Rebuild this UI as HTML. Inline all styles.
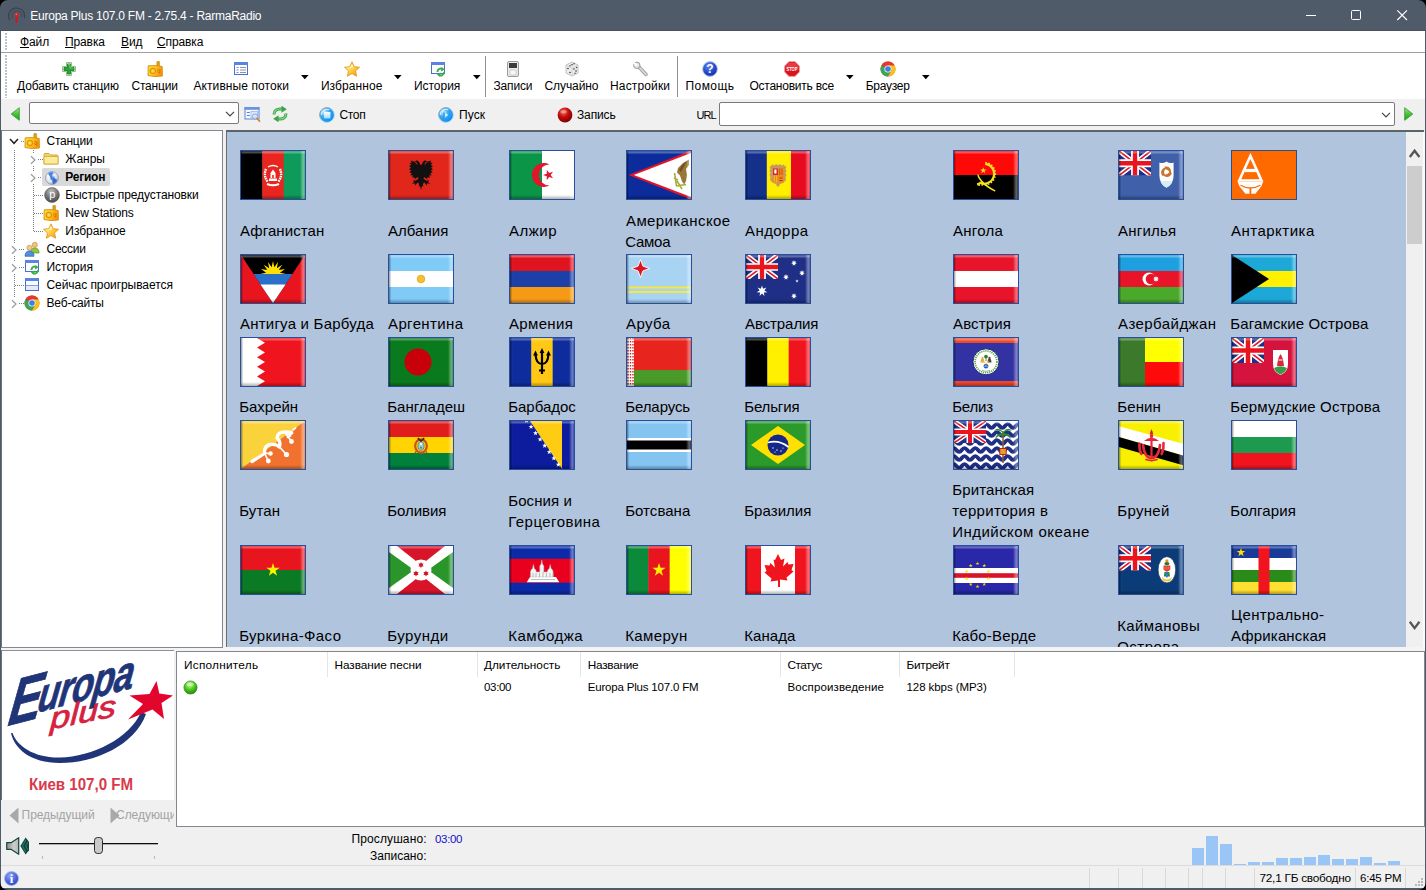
<!DOCTYPE html>
<html lang="ru"><head><meta charset="utf-8"><title>Europa Plus 107.0 FM - 2.75.4 - RarmaRadio</title>
<style>
html,body{margin:0;padding:0;}
body{width:1426px;height:890px;overflow:hidden;position:relative;background:#f0f0f0;font-family:"Liberation Sans",sans-serif;font-size:12px;color:#000;}
.a{position:absolute;}
.t{position:absolute;white-space:nowrap;line-height:16px;height:16px;}
.c{text-align:center;}
#title{left:0;top:0;width:1426px;height:31px;background:#4f5b68;}
#title .t{color:#fff;}
#menu{left:1px;top:31px;width:1424px;height:21px;background:#fff;}
#tb{left:1px;top:53px;width:1424px;height:46px;background:#fff;}
#addr{left:1px;top:99px;width:1424px;height:31px;background:#f0f0f0;}
.combo{position:absolute;background:#fff;border:1px solid #7a7a7a;border-radius:2px;box-sizing:border-box;}
.lbl{position:absolute;font-size:15px;line-height:21px;white-space:nowrap;color:#000;}
.flag{position:absolute;width:66px;height:50px;}
.tree .t{font-size:12px;}
u{text-decoration:underline;text-underline-offset:1px;}
</style></head><body>

<!-- window frame -->
<div class="a" style="left:0;top:0;width:1426px;height:890px;background:#4f5b68;"></div>
<div class="a" style="left:1px;top:31px;width:1424px;height:857px;background:#f0f0f0;"></div>
<!-- title bar -->
<div class="a" id="title">
  <svg class="a" style="left:8px;top:6px" width="18" height="18" viewBox="0 0 18 18" fill="none">
    <path d="M1.800 14.200A8 8 0 1 1 16.400 12" stroke="#3a444d" stroke-width="1.300"/>
    <path d="M4.600 12.500A5 5 0 1 1 13.600 11.300" stroke="#414b55" stroke-width="1.100"/>
    <path d="M8.800 9.500L8.500 16" stroke="#d8141c" stroke-width="2.200" stroke-linecap="round"/>
    <circle cx="8.800" cy="8.800" r="2" fill="#e81c24"/><circle cx="8.300" cy="8.200" r=".7" fill="#ff7a7a"/>
    <path d="M12.500 10.500v5" stroke="#4a5a9a" stroke-width=".9" opacity=".7"/>
  </svg>
  <div class="t" style="left:30.300px;top:8px;font-size:12px;letter-spacing:-0.25px" id="ttl">Europa Plus 107.0 FM - 2.75.4 - RarmaRadio</div>
  <svg class="a" style="left:1300px;top:5px" width="120" height="22" viewBox="0 0 120 22" fill="none" stroke="#fff" stroke-width="1">
    <path d="M6 10.5h10"/>
    <rect x="51.5" y="5.500" width="9" height="9" rx="1"/>
    <path d="M97.300 5.300l9.700 9.700M107 5.300l-9.700 9.700" stroke-width="1.150"/>
  </svg>
</div>
<div class="a" style="left:0;top:30px;width:1426px;height:1px;background:#47525d"></div>
<!-- corners -->
<svg class="a" style="left:0;top:0" width="8" height="8"><path d="M0 0h8A8 8 0 0 0 0 8z" fill="#000"/></svg>
<svg class="a" style="left:1418px;top:0" width="8" height="8"><path d="M8 0H0A8 8 0 0 1 8 8z" fill="#000"/></svg>
<!-- menu -->
<div class="a" id="menu" style="letter-spacing:-0.12px">
  <div class="t" style="left:19px;top:3px"><u>Ф</u>айл</div>
  <div class="t" style="left:64px;top:3px"><u>П</u>равка</div>
  <div class="t" style="left:120px;top:3px"><u>В</u>ид</div>
  <div class="t" style="left:156px;top:3px"><u>С</u>правка</div>
</div>
<div class="a" style="left:1px;top:52px;width:1424px;height:1px;background:#a0a0a0"></div>
<!-- toolbar -->
<div class="a" id="tb"></div>
<!-- gripper -->
<div class="a" style="left:5px;top:33px;width:2px;height:18px;background-image:repeating-linear-gradient(#bcc3ce 0 2px,transparent 2px 3px)"></div>
<div class="a" style="left:5px;top:55px;width:2px;height:43px;background-image:repeating-linear-gradient(#bcc3ce 0 2px,transparent 2px 3px)"></div>

<div class="t" style="top:78px;left:17.0px;letter-spacing:-0.11px;">Добавить станцию</div>
<div class="t" style="top:78px;left:131.4px;letter-spacing:-0.18px;">Станции</div>
<div class="t" style="top:78px;left:193.4px;letter-spacing:0.10px;">Активные потоки</div>
<div class="t" style="top:78px;left:320.9px;letter-spacing:0.09px;">Избранное</div>
<div class="t" style="top:78px;left:413.9px;letter-spacing:-0.01px;">История</div>
<div class="t" style="top:78px;left:493.5px;letter-spacing:-0.17px;">Записи</div>
<div class="t" style="top:78px;left:544.5px;letter-spacing:-0.08px;">Случайно</div>
<div class="t" style="top:78px;left:610.0px;letter-spacing:0.15px;">Настройки</div>
<div class="t" style="top:78px;left:685.5px;letter-spacing:0.43px;">Помощь</div>
<div class="t" style="top:78px;left:749.4px;letter-spacing:-0.23px;">Остановить все</div>
<div class="t" style="top:78px;left:865.8px;letter-spacing:-0.30px;">Браузер</div>
<svg class="a" style="left:300.7px;top:75px" width="8" height="5"><path d="M0 0h7.600L3.800 4.200z" fill="#000"/></svg>
<svg class="a" style="left:393.8px;top:75px" width="8" height="5"><path d="M0 0h7.600L3.800 4.200z" fill="#000"/></svg>
<svg class="a" style="left:472.7px;top:75px" width="8" height="5"><path d="M0 0h7.600L3.800 4.200z" fill="#000"/></svg>
<svg class="a" style="left:845.7px;top:75px" width="8" height="5"><path d="M0 0h7.600L3.800 4.200z" fill="#000"/></svg>
<svg class="a" style="left:921.7px;top:75px" width="8" height="5"><path d="M0 0h7.600L3.800 4.200z" fill="#000"/></svg>
<div class="a" style="left:485px;top:56px;width:1px;height:41px;background:#8e8e8e"></div>
<div class="a" style="left:677px;top:56px;width:1px;height:41px;background:#8e8e8e"></div>
<svg class="a" style="left:61px;top:61px" width="16" height="16" viewBox="0 0 16 16" ><path d="M5.500 1.500h5v4h4v5h-4v4h-5v-4h-4v-5h4z" fill="#e9f6e9" stroke="#8fc08f" stroke-width="1" stroke-linejoin="round"/>
<path d="M6.500 3h3v3.500h3.500v3h-3.500v3.500h-3v-3.500h-3.500v-3h3.500z" fill="#2aa336" stroke="#0f7a1d" stroke-width=".8"/>
<path d="M7 3.600h2v3.500h3.200" fill="none" stroke="#7fdc86" stroke-width=".8"/></svg>
<svg class="a" style="left:147px;top:61px" width="16" height="16" viewBox="0 0 16 16" ><defs><linearGradient id="rg1" x1="0" y1="0" x2="1" y2=".3"><stop offset="0" stop-color="#ffe030"/><stop offset=".55" stop-color="#ffc21c"/><stop offset="1" stop-color="#ff920c"/></linearGradient></defs>
<rect x="9.800" y=".3" width="2.800" height="5.200" rx=".8" fill="#d8a018" stroke="#b88410" stroke-width=".5"/>
<path d="M1.200 4.800L9.500 4.600 15.200 5.500 15.400 15 8 15.600 1 14.500z" fill="url(#rg1)" stroke="#cf8e12" stroke-width=".9" stroke-linejoin="round"/>
<circle cx="5.800" cy="10" r="2.700" fill="#ffc82a" stroke="#c8820a" stroke-width=".9"/><circle cx="5.800" cy="10" r="1" fill="#ffdc60"/>
<path d="M10.300 7.800l1.600 1.800M10.300 10.200l1.600 1.800M12.800 8v4.600" stroke="#c47a08" stroke-width="1"/></svg>
<svg class="a" style="left:233px;top:61px" width="16" height="16" viewBox="0 0 16 16" ><rect x="1.500" y="1.500" width="13" height="12" fill="#fdfdff" stroke="#4a6fd0" stroke-width="1"/>
<rect x="1" y="1" width="14" height="3" fill="#5b84e0"/>
<path d="M3.500 6.500h2M3.500 9h2M3.500 11.500h2" stroke="#6d8fdd" stroke-width="1.200"/>
<path d="M7 6.500h6M7 9h6M7 11.500h6" stroke="#8a93a8" stroke-width="1.200"/></svg>
<svg class="a" style="left:344px;top:61px" width="16" height="16" viewBox="0 0 16 16" ><defs><linearGradient id="sg344061" x1="0" y1="0" x2="1" y2="1"><stop offset="0" stop-color="#fffce8"/><stop offset=".42" stop-color="#ffdc55"/><stop offset="1" stop-color="#ff8c08"/></linearGradient></defs>
<path d="M8 .8l2.200 4.900 5.300.6-4 3.600 1.100 5.300L8 12.500l-4.600 2.700 1.100-5.300-4-3.600 5.300-.6z" fill="url(#sg344061)" stroke="#e09a1a" stroke-width=".9" stroke-linejoin="round"/>
<path d="M8 3l1.300 3.200-3.800.6-2.500.1 3.300-.9z" fill="#fff" opacity=".7"/></svg>
<svg class="a" style="left:430px;top:61px" width="16" height="16" viewBox="0 0 16 16" ><rect x="1.500" y="1.500" width="13" height="11" fill="#fdfdff" stroke="#4a6fd0" stroke-width="1"/>
<rect x="1" y="1" width="14" height="3" fill="#5b84e0"/><g transform="translate(10.8 11)" fill="none" stroke-linecap="butt">
<path d="M-3.4 0A3.4 3.4 0 0 1 2.04 -2.72" stroke="#3fae49" stroke-width="1.87"/>
<path d="M0.68 -4.93l3.40 2.55l-3.91 1.87z" fill="#3fae49" stroke="none"/>
<path d="M3.4 0A3.4 3.4 0 0 1 -2.04 2.72" stroke="#3fae49" stroke-width="1.87"/>
<path d="M-0.68 4.93l-3.40 -2.55l3.91 -1.87z" fill="#3fae49" stroke="none"/>
</g></svg>
<svg class="a" style="left:505px;top:61px" width="16" height="16" viewBox="0 0 16 16" ><rect x="2.500" y=".5" width="11" height="15" rx="1.500" fill="#e9e9e9" stroke="#9a9a9a" stroke-width="1"/>
<rect x="4" y="2" width="8" height="5" fill="#3b3b3b"/>
<rect x="5" y="9" width="6" height="5" rx="1" fill="#f8f8f8" stroke="#c4c4c4" stroke-width=".8"/></svg>
<svg class="a" style="left:564px;top:61px" width="16" height="16" viewBox="0 0 16 16" ><path d="M8 1l6 3v8l-6 3-6-3V4z" fill="#ececec" stroke="#b5b5b5" stroke-width=".8" stroke-linejoin="round"/>
<path d="M2 4l6 3 6-3M8 7v8" stroke="#c9c9c9" stroke-width=".7" fill="none"/>
<g fill="#3a3a3a"><circle cx="8" cy="3.800" r=".8"/><circle cx="6" cy="4.800" r=".7"/><circle cx="10" cy="2.800" r=".7"/>
<circle cx="4" cy="7.500" r=".8"/><circle cx="6" cy="11.500" r=".8"/>
<circle cx="10" cy="8" r=".8"/><circle cx="12" cy="10" r=".8"/><circle cx="11" cy="12.300" r=".7"/><circle cx="12.500" cy="6.500" r=".7"/></g></svg>
<svg class="a" style="left:632px;top:61px" width="16" height="16" viewBox="0 0 16 16" ><path d="M6.500 5.500l7.500 8" stroke="#9a9a9a" stroke-width="3.400" stroke-linecap="round"/>
<path d="M6.500 5.500l7.500 8" stroke="#dedede" stroke-width="1.800" stroke-linecap="round"/>
<circle cx="4.800" cy="4.300" r="3.200" fill="#e3e3e3" stroke="#9a9a9a" stroke-width="1"/>
<path d="M1 1l4.200 3.800" stroke="#fff" stroke-width="2.200"/></svg>
<svg class="a" style="left:702px;top:61px" width="16" height="16" viewBox="0 0 16 16" ><defs><radialGradient id="hg" cx=".4" cy=".3" r=".8"><stop offset="0" stop-color="#5f86f0"/><stop offset=".6" stop-color="#1f45c8"/><stop offset="1" stop-color="#102a90"/></radialGradient></defs>
<circle cx="8" cy="8" r="7.400" fill="url(#hg)" stroke="#b9c6ea" stroke-width="1"/>
<text x="8" y="12.300" text-anchor="middle" font-family="Liberation Sans,sans-serif" font-weight="bold" font-size="12" fill="#fff">?</text></svg>
<svg class="a" style="left:784px;top:61px" width="16" height="16" viewBox="0 0 16 16" ><path d="M5 .6h6L15.400 5v6L11 15.400H5L.6 11V5z" fill="#d8141c" stroke="#e9a0a3" stroke-width="1"/>
<path d="M5.300 1.800h5.400L14.200 5.300v2H1.800v-2z" fill="#ff6a6e" opacity=".45"/>
<text x="8" y="10" text-anchor="middle" font-family="Liberation Sans,sans-serif" font-weight="bold" font-size="5" fill="#fff" textLength="11" lengthAdjust="spacingAndGlyphs">STOP</text></svg>
<svg class="a" style="left:880px;top:61px" width="16" height="16" viewBox="0 0 16 16" ><circle cx="8" cy="8" r="7.500" fill="#e23a2e"/>
<path d="M8 8L1.500 4.250A7.500 7.500 0 0 0 8 15.500L11.750 9z" fill="#3aa757"/>
<path d="M8 8l3.750 1L8 15.500A7.500 7.500 0 0 0 14.500 4.250H8z" fill="#fbc116"/>
<path d="M8 8L1.500 4.250A7.500 7.500 0 0 1 14.500 4.250H8z" fill="#e23a2e"/>
<circle cx="8" cy="8" r="3.600" fill="#f4f4f4"/><circle cx="8" cy="8" r="2.800" fill="#3f7ee8"/></svg>
<div class="a" id="addr"></div>
<svg class="a" style="left:10px;top:107px" width="11" height="14" viewBox="0 0 11 14" ><defs><linearGradient id="gaL" x1="0" y1="0" x2="0" y2="1"><stop offset="0" stop-color="#a8e896"/><stop offset=".5" stop-color="#4cc03c"/><stop offset="1" stop-color="#2a9a22"/></linearGradient></defs>
<path d="M9.300 0.700V13.300L1.200 7z" fill="url(#gaL)" stroke="#2a9a22" stroke-width=".8" stroke-linejoin="round"/></svg>
<div class="combo" style="left:29px;top:102px;width:210px;height:22px"></div>
<svg class="a" style="left:225px;top:111px" width="10" height="6" viewBox="0 0 10 6" ><path d="M1 .8l4 4 4-4" fill="none" stroke="#444" stroke-width="1.200"/></svg>
<svg class="a" style="left:244px;top:106px" width="17" height="16" viewBox="0 0 17 16" ><rect x="1" y="1.500" width="14" height="11.500" fill="#f4f8ff" stroke="#5a82d8" stroke-width="1"/>
<rect x=".5" y="1" width="15" height="2.800" fill="#6a93e6"/>
<path d="M2.800 6.500h3M2.800 9.500h3" stroke="#5a7fd0" stroke-width="1.200"/>
<rect x="7" y="5.500" width="6.500" height="6" fill="#dbe8fb" stroke="#9db6e6" stroke-width=".8"/>
<circle cx="11" cy="10.500" r="2.600" fill="#cfe3fa" fill-opacity=".8" stroke="#8da4c8" stroke-width=".9"/>
<path d="M13 12.500l2.600 2.600" stroke="#c98a2a" stroke-width="1.600" stroke-linecap="round"/></svg>
<svg class="a" style="left:272px;top:106px" width="16" height="16" viewBox="0 0 16 16" ><g fill="none" stroke="#3aa544" stroke-width="3" stroke-linecap="butt">
<path d="M2 8.500C2 4.500 5 3 8 3h2"/>
<path d="M14 7.500C14 11.500 11 13 8 13H6"/></g>
<g fill="none" stroke="#86d98c" stroke-width="1.200">
<path d="M2 8.500C2 4.500 5 3 8 3h2"/>
<path d="M14 7.500C14 11.500 11 13 8 13H6"/></g>
<path d="M9.500 -.3L14.800 3.200 9.500 6.700z" fill="#3aa544"/>
<path d="M6.500 9.300L1.200 12.800 6.500 16.300z" fill="#3aa544"/></svg>
<svg class="a" style="left:319px;top:107px" width="16" height="16" viewBox="0 0 16 16" ><defs><radialGradient id="bbstop" cx=".32" cy=".3" r=".75"><stop offset="0" stop-color="#c8ecff"/><stop offset=".45" stop-color="#3aa6f2"/><stop offset="1" stop-color="#0a8cec"/></radialGradient>
<linearGradient id="bbstopi" x1="0" y1="0" x2="0" y2="1"><stop offset="0" stop-color="#ffffff"/><stop offset="1" stop-color="#9ae0ff"/></linearGradient>
<linearGradient id="bbstops" x1="0" y1="0" x2="1" y2="1"><stop offset="0" stop-color="#7a8a96"/><stop offset=".5" stop-color="#9ad0f0"/><stop offset="1" stop-color="#cdeeff"/></linearGradient></defs>
<circle cx="8" cy="8" r="7.400" fill="url(#bbstop)" stroke="url(#bbstops)" stroke-width="1"/>
<path d="M2.300 8a5.700 5.700 0 0 1 8-5.200" fill="none" stroke="#e8f8ff" stroke-width="1.100" opacity=".85"/><rect x="5" y="5" width="6.400" height="6.400" fill="url(#bbstopi)"/></svg>
<div class="t" style="top:107px;left:339.5px;letter-spacing:-0.33px;">Стоп</div>
<svg class="a" style="left:438px;top:107px" width="16" height="16" viewBox="0 0 16 16" ><defs><radialGradient id="bbplay" cx=".32" cy=".3" r=".75"><stop offset="0" stop-color="#c8ecff"/><stop offset=".45" stop-color="#3aa6f2"/><stop offset="1" stop-color="#0a8cec"/></radialGradient>
<linearGradient id="bbplayi" x1="0" y1="0" x2="0" y2="1"><stop offset="0" stop-color="#ffffff"/><stop offset="1" stop-color="#9ae0ff"/></linearGradient>
<linearGradient id="bbplays" x1="0" y1="0" x2="1" y2="1"><stop offset="0" stop-color="#7a8a96"/><stop offset=".5" stop-color="#9ad0f0"/><stop offset="1" stop-color="#cdeeff"/></linearGradient></defs>
<circle cx="8" cy="8" r="7.400" fill="url(#bbplay)" stroke="url(#bbplays)" stroke-width="1"/>
<path d="M2.300 8a5.700 5.700 0 0 1 8-5.200" fill="none" stroke="#e8f8ff" stroke-width="1.100" opacity=".85"/><path d="M5.600 4.800L9 8 5.600 11.200z" fill="#0a6cc8"/><path d="M6.600 4.900L10.200 8 6.600 11.100z" fill="#b8f4ff"/></svg>
<div class="t" style="top:107px;left:459.0px;letter-spacing:0.09px;">Пуск</div>
<svg class="a" style="left:557px;top:107px" width="16" height="16" viewBox="0 0 16 16" ><defs><radialGradient id="rb" cx=".4" cy=".3" r=".8"><stop offset="0" stop-color="#f0685c"/><stop offset=".45" stop-color="#c40a0a"/><stop offset="1" stop-color="#6c0000"/></radialGradient></defs>
<circle cx="8" cy="8" r="7.400" fill="url(#rb)"/><ellipse cx="6.500" cy="4.800" rx="3.200" ry="1.800" fill="#fff" opacity=".35"/></svg>
<div class="t" style="top:107px;left:577.0px;letter-spacing:-0.13px;">Запись</div>
<div class="t" style="top:107px;left:696.6px;font-size:11px;letter-spacing:-1px;">URL</div>
<div class="combo" style="left:719px;top:102px;width:676px;height:24px"></div>
<svg class="a" style="left:1381px;top:112px" width="10" height="6" viewBox="0 0 10 6" ><path d="M1 .8l4 4 4-4" fill="none" stroke="#444" stroke-width="1.200"/></svg>
<svg class="a" style="left:1403px;top:107px" width="11" height="14" viewBox="0 0 11 14" ><defs><linearGradient id="gaR" x1="0" y1="0" x2="0" y2="1"><stop offset="0" stop-color="#a8e896"/><stop offset=".5" stop-color="#4cc03c"/><stop offset="1" stop-color="#2a9a22"/></linearGradient></defs>
<path d="M1.700 0.700V13.300L9.800 7z" fill="url(#gaR)" stroke="#2a9a22" stroke-width=".8" stroke-linejoin="round"/></svg>
<div class="a" style="left:1px;top:130px;width:222px;height:518px;background:#fff;border:1px solid #828790;border-left-color:#6e747c;box-sizing:border-box"></div>
<div class="a" style="left:14px;top:150px;width:1px;height:153px;background-image:repeating-linear-gradient(180deg,#7c7c7c 0 1px,transparent 1px 2px)"></div>
<div class="a" style="left:33px;top:150px;width:1px;height:82px;background-image:repeating-linear-gradient(180deg,#7c7c7c 0 1px,transparent 1px 2px)"></div>
<div class="a" style="left:15px;top:141px;width:9px;height:1px;background-image:repeating-linear-gradient(90deg,#7c7c7c 0 1px,transparent 1px 2px)"></div>
<svg class="a" style="left:24px;top:133px" width="16" height="16" viewBox="0 0 16 16" ><defs><linearGradient id="rg2" x1="0" y1="0" x2="1" y2=".3"><stop offset="0" stop-color="#ffe030"/><stop offset=".55" stop-color="#ffc21c"/><stop offset="1" stop-color="#ff920c"/></linearGradient></defs>
<rect x="9.800" y=".3" width="2.800" height="5.200" rx=".8" fill="#d8a018" stroke="#b88410" stroke-width=".5"/>
<path d="M1.200 4.800L9.500 4.600 15.200 5.500 15.400 15 8 15.600 1 14.500z" fill="url(#rg2)" stroke="#cf8e12" stroke-width=".9" stroke-linejoin="round"/>
<circle cx="5.800" cy="10" r="2.700" fill="#ffc82a" stroke="#c8820a" stroke-width=".9"/><circle cx="5.800" cy="10" r="1" fill="#ffdc60"/>
<path d="M10.300 7.800l1.600 1.800M10.300 10.200l1.600 1.800M12.800 8v4.600" stroke="#c47a08" stroke-width="1"/></svg>
<div class="t" style="top:133px;left:46.5px;letter-spacing:-0.25px;">Станции</div>
<div class="a" style="left:34px;top:159px;width:9px;height:1px;background-image:repeating-linear-gradient(90deg,#7c7c7c 0 1px,transparent 1px 2px)"></div>
<svg class="a" style="left:43px;top:151px" width="16" height="15" viewBox="0 0 16 15" ><path d="M1 3.500q0-1 1-1h4l1.500 1.500H14q1 0 1 1V13H1z" fill="#f3d267" stroke="#c9a233" stroke-width=".9"/>
<path d="M1 13V6.500q0-1 1-1h12q1 0 1 1V13z" fill="#fbec9a" stroke="#d4ad3c" stroke-width=".9"/></svg>
<div class="t" style="top:151px;left:65.3px;letter-spacing:-0.05px;">Жанры</div>
<div class="a" style="left:34px;top:177px;width:9px;height:1px;background-image:repeating-linear-gradient(90deg,#7c7c7c 0 1px,transparent 1px 2px)"></div>
<div class="a" style="left:42px;top:168px;width:68px;height:18px;background:#d9d9d9;border-radius:2px"></div>
<svg class="a" style="left:45px;top:170.5px" width="14" height="14" viewBox="0 0 16 16" ><defs><radialGradient id="gl" cx=".35" cy=".3" r=".8"><stop offset="0" stop-color="#ffffff"/><stop offset=".6" stop-color="#dfe6f2"/><stop offset="1" stop-color="#9aa6bd"/></radialGradient></defs>
<circle cx="8" cy="8" r="7.300" fill="url(#gl)" stroke="#8b93a6" stroke-width=".9"/>
<path d="M3.500 2.800q2.500-2 5-1.600l1.200 2-1.700 1.200.6 1.800 2 .5.600 1.500 2.600 1.600-.5 2.800-3.300 2.600-1.500-.8-.2-3.300-2-1.700-.6-2.700z" fill="#4a82e0"/><path d="M9.200 8.200l3.600 1.900-.5 2.500-2.900 2.300z" fill="#3468cc"/>
<path d="M5 1.800q3-1.300 4.500 0l-1 2.700 1.800 1.800-1.500 2.200" fill="none" stroke="#7aa4ee" stroke-width=".6"/></svg>
<div class="t" style="top:169px;left:65.3px;font-weight:bold;letter-spacing:-0.25px;">Регион</div>
<div class="a" style="left:34px;top:195px;width:9px;height:1px;background-image:repeating-linear-gradient(90deg,#7c7c7c 0 1px,transparent 1px 2px)"></div>
<svg class="a" style="left:44px;top:187px" width="16" height="16" viewBox="0 0 16 16" ><defs><radialGradient id="ps" cx=".45" cy=".25" r=".85"><stop offset="0" stop-color="#bdbdbd"/><stop offset=".55" stop-color="#6f6f6f"/><stop offset="1" stop-color="#3c3c3c"/></radialGradient></defs>
<circle cx="8" cy="8" r="7.400" fill="url(#ps)" stroke="#555" stroke-width=".6"/>
<text x="8.200" y="10.600" text-anchor="middle" font-family="Liberation Sans,sans-serif" font-size="11" fill="#fff">p</text></svg>
<div class="t" style="top:187px;left:65.3px;letter-spacing:-0.10px;">Быстрые предустановки</div>
<div class="a" style="left:34px;top:213px;width:9px;height:1px;background-image:repeating-linear-gradient(90deg,#7c7c7c 0 1px,transparent 1px 2px)"></div>
<svg class="a" style="left:43px;top:205px" width="16" height="16" viewBox="0 0 16 16" ><defs><linearGradient id="rg3" x1="0" y1="0" x2="1" y2=".3"><stop offset="0" stop-color="#ffe030"/><stop offset=".55" stop-color="#ffc21c"/><stop offset="1" stop-color="#ff920c"/></linearGradient></defs>
<rect x="9.800" y=".3" width="2.800" height="5.200" rx=".8" fill="#d8a018" stroke="#b88410" stroke-width=".5"/>
<path d="M1.200 4.800L9.500 4.600 15.200 5.500 15.400 15 8 15.600 1 14.500z" fill="url(#rg3)" stroke="#cf8e12" stroke-width=".9" stroke-linejoin="round"/>
<circle cx="5.800" cy="10" r="2.700" fill="#ffc82a" stroke="#c8820a" stroke-width=".9"/><circle cx="5.800" cy="10" r="1" fill="#ffdc60"/>
<path d="M10.300 7.800l1.600 1.800M10.300 10.200l1.600 1.800M12.800 8v4.600" stroke="#c47a08" stroke-width="1"/></svg>
<div class="t" style="top:205px;left:65.3px;letter-spacing:-0.20px;">New Stations</div>
<div class="a" style="left:34px;top:231px;width:9px;height:1px;background-image:repeating-linear-gradient(90deg,#7c7c7c 0 1px,transparent 1px 2px)"></div>
<svg class="a" style="left:43px;top:223px" width="16" height="16" viewBox="0 0 16 16" ><defs><linearGradient id="sg43223" x1="0" y1="0" x2="1" y2="1"><stop offset="0" stop-color="#fffce8"/><stop offset=".42" stop-color="#ffdc55"/><stop offset="1" stop-color="#ff8c08"/></linearGradient></defs>
<path d="M8 .8l2.200 4.900 5.300.6-4 3.600 1.100 5.300L8 12.500l-4.600 2.700 1.100-5.300-4-3.600 5.300-.6z" fill="url(#sg43223)" stroke="#e09a1a" stroke-width=".9" stroke-linejoin="round"/>
<path d="M8 3l1.300 3.200-3.800.6-2.500.1 3.300-.9z" fill="#fff" opacity=".7"/></svg>
<div class="t" style="top:223px;left:65.3px;letter-spacing:-0.04px;">Избранное</div>
<div class="a" style="left:15px;top:249px;width:9px;height:1px;background-image:repeating-linear-gradient(90deg,#7c7c7c 0 1px,transparent 1px 2px)"></div>
<svg class="a" style="left:24px;top:241px" width="16" height="16" viewBox="0 0 16 16" ><circle cx="10.800" cy="3.800" r="2.600" fill="#f1c27a" stroke="#b98a3a" stroke-width=".6"/>
<path d="M6.500 12q0-5 4.300-5t4.300 5z" fill="#8ec63f" stroke="#5c9a1c" stroke-width=".7"/>
<circle cx="5.500" cy="6.800" r="2.600" fill="#f3c98a" stroke="#b98a3a" stroke-width=".6"/>
<path d="M1 15.300q0-5.300 4.500-5.300t4.500 5.300z" fill="#4f8fe0" stroke="#2c64b4" stroke-width=".7"/></svg>
<div class="t" style="top:241px;left:46.5px;letter-spacing:-0.25px;">Сессии</div>
<div class="a" style="left:15px;top:267px;width:9px;height:1px;background-image:repeating-linear-gradient(90deg,#7c7c7c 0 1px,transparent 1px 2px)"></div>
<svg class="a" style="left:24px;top:259px" width="16" height="16" viewBox="0 0 16 16" ><rect x="1.500" y="1.500" width="13" height="11" fill="#fdfdff" stroke="#4a6fd0" stroke-width="1"/>
<rect x="1" y="1" width="14" height="3" fill="#5b84e0"/><g transform="translate(10.8 11)" fill="none" stroke-linecap="butt">
<path d="M-3.4 0A3.4 3.4 0 0 1 2.04 -2.72" stroke="#3fae49" stroke-width="1.87"/>
<path d="M0.68 -4.93l3.40 2.55l-3.91 1.87z" fill="#3fae49" stroke="none"/>
<path d="M3.4 0A3.4 3.4 0 0 1 -2.04 2.72" stroke="#3fae49" stroke-width="1.87"/>
<path d="M-0.68 4.93l-3.40 -2.55l3.91 -1.87z" fill="#3fae49" stroke="none"/>
</g></svg>
<div class="t" style="top:259px;left:46.5px;letter-spacing:-0.01px;">История</div>
<div class="a" style="left:15px;top:285px;width:9px;height:1px;background-image:repeating-linear-gradient(90deg,#7c7c7c 0 1px,transparent 1px 2px)"></div>
<svg class="a" style="left:24px;top:277px" width="16" height="15" viewBox="0 0 16 15" ><rect x="1.500" y="1.500" width="13" height="12" fill="#fdfdff" stroke="#4a6fd0" stroke-width="1"/>
<rect x="1" y="1" width="14" height="3" fill="#5b84e0"/>
<path d="M2 8.500h12" stroke="#7f9fe6" stroke-width="1"/><rect x="2" y="9" width="12" height="4" fill="#e4ecfb"/></svg>
<div class="t" style="top:277px;left:46.5px;letter-spacing:-0.06px;">Сейчас проигрывается</div>
<div class="a" style="left:15px;top:303px;width:9px;height:1px;background-image:repeating-linear-gradient(90deg,#7c7c7c 0 1px,transparent 1px 2px)"></div>
<svg class="a" style="left:24px;top:295px" width="16" height="16" viewBox="0 0 16 16" ><circle cx="8" cy="8" r="7.500" fill="#e23a2e"/>
<path d="M8 8L1.500 4.250A7.500 7.500 0 0 0 8 15.500L11.750 9z" fill="#3aa757"/>
<path d="M8 8l3.750 1L8 15.500A7.500 7.500 0 0 0 14.500 4.250H8z" fill="#fbc116"/>
<path d="M8 8L1.500 4.250A7.500 7.500 0 0 1 14.500 4.250H8z" fill="#e23a2e"/>
<circle cx="8" cy="8" r="3.600" fill="#f4f4f4"/><circle cx="8" cy="8" r="2.800" fill="#3f7ee8"/></svg>
<div class="t" style="top:295px;left:46.5px;letter-spacing:-0.18px;">Веб-сайты</div>
<div class="a" style="left:8px;top:135px;width:12px;height:12px;background:#fff"></div><svg class="a" style="left:9px;top:138px" width="10" height="7" viewBox="0 0 10 7" ><path d="M1 1l4 4.300 4-4.300" fill="none" stroke="#222" stroke-width="1.500"/></svg>
<div class="a" style="left:28px;top:153px;width:10px;height:12px;background:#fff"></div><svg class="a" style="left:30px;top:155px" width="7" height="10" viewBox="0 0 7 10" ><path d="M1 1.200l4 3.800-4 3.800" fill="none" stroke="#9a9a9a" stroke-width="1.200"/></svg>
<div class="a" style="left:28px;top:171px;width:10px;height:12px;background:#fff"></div><svg class="a" style="left:30px;top:173px" width="7" height="10" viewBox="0 0 7 10" ><path d="M1 1.200l4 3.800-4 3.800" fill="none" stroke="#9a9a9a" stroke-width="1.200"/></svg>
<div class="a" style="left:9px;top:243px;width:10px;height:12px;background:#fff"></div><svg class="a" style="left:11px;top:245px" width="7" height="10" viewBox="0 0 7 10" ><path d="M1 1.200l4 3.800-4 3.800" fill="none" stroke="#9a9a9a" stroke-width="1.200"/></svg>
<div class="a" style="left:9px;top:261px;width:10px;height:12px;background:#fff"></div><svg class="a" style="left:11px;top:263px" width="7" height="10" viewBox="0 0 7 10" ><path d="M1 1.200l4 3.800-4 3.800" fill="none" stroke="#9a9a9a" stroke-width="1.200"/></svg>
<div class="a" style="left:9px;top:297px;width:10px;height:12px;background:#fff"></div><svg class="a" style="left:11px;top:299px" width="7" height="10" viewBox="0 0 7 10" ><path d="M1 1.200l4 3.800-4 3.800" fill="none" stroke="#9a9a9a" stroke-width="1.200"/></svg>
<div class="a" style="left:226px;top:130px;width:1198px;height:517px;background:#b0c4de;border-left:1px solid #6b6b6b;border-top:2px solid #5c6468;box-sizing:border-box;overflow:hidden" id="fp"></div>
<svg class="a" width="0" height="0" style="left:0;top:0"><defs><linearGradient id="glT" x1="0" y1="0" x2="0" y2="1"><stop offset="0" stop-color="#fff" stop-opacity=".14"/><stop offset=".35" stop-color="#fff" stop-opacity=".33"/><stop offset="1" stop-color="#fff" stop-opacity="0"/></linearGradient><linearGradient id="glB" x1="0" y1="0" x2="0" y2="1"><stop offset="0" stop-color="#000" stop-opacity="0"/><stop offset=".7" stop-color="#000" stop-opacity=".22"/><stop offset="1" stop-color="#000" stop-opacity=".3"/></linearGradient><linearGradient id="glL" x1="0" y1="0" x2="1" y2="0"><stop offset="0" stop-color="#000" stop-opacity=".42"/><stop offset=".6" stop-color="#000" stop-opacity=".08"/><stop offset="1" stop-color="#fff" stop-opacity="0"/></linearGradient><linearGradient id="glR" x1="0" y1="0" x2="1" y2="0"><stop offset="0" stop-color="#fff" stop-opacity="0"/><stop offset=".65" stop-color="#fff" stop-opacity=".4"/><stop offset="1" stop-color="#fff" stop-opacity=".22"/></linearGradient></defs></svg>
<div class="a" style="left:227px;top:132px;width:1179px;height:515px;overflow:hidden"><div class="a" style="left:-227px;top:-132px">
<svg class="flag" style="left:240px;top:150px" width="66" height="50" viewBox="0 0 66 50"><svg x="1" y="1" width="64" height="48" viewBox="0 0 64 48" overflow="hidden"><rect x="0.00" y="0" width="21.63" height="48" fill="#000"/><rect x="21.33" y="0" width="21.63" height="48" fill="#e8261f"/><rect x="42.67" y="0" width="21.63" height="48" fill="#0d9a5a"/><g fill="none" stroke="#fff"><path d="M25 18q-3 7 2 13M39 18q3 7-2 13" stroke-width="2.400" stroke-dasharray="1.600 .7"/><path d="M26 33q6 2.500 12 0" stroke-width="2"/><path d="M27 16q5-3 10 0" stroke-width="1.300"/></g><path d="M28 30h8v-2.500h-8zM29.500 27v-5l2.500-3.500 2.500 3.500v5z" fill="#fff"/><path d="M31.200 27v-3h1.600v3z" fill="#e8261f"/></svg><rect x="1" y="1" width="64" height="3.500" fill="url(#glT)"/><rect x="1" y="45" width="64" height="4" fill="url(#glB)"/><rect x="1" y="1" width="3" height="48" fill="url(#glL)"/><rect x="60" y="1" width="5" height="48" fill="url(#glR)"/><rect x=".5" y=".5" width="65" height="49" fill="none" stroke="#284f9c" stroke-width="1"/></svg>
<div class="lbl" style="left:240px;top:220.0px"><span style="letter-spacing:0.08px;margin-left:0px">Афганистан</span></div>
<svg class="flag" style="left:388px;top:150px" width="66" height="50" viewBox="0 0 66 50"><svg x="1" y="1" width="64" height="48" viewBox="0 0 64 48" overflow="hidden"><rect x="0" y="0" width="64" height="48" fill="#e1261c"/><ellipse cx="32" cy="21.500" rx="3.600" ry="8" fill="#111"/><polygon points="31,16 28,13.5 25,10.5 21.5,9.5 23,11.5 20.5,12 22.3,14 20,15 22,16.8 20,18.2 22.2,19.6 20.3,21.3 22.8,22.3 21.3,24.3 24,24.6 23,26.8 25.6,26.2 25.8,28.3 28,26.6 31,26" fill="#111"/><polygon points="33,16 36,13.5 39,10.5 42.5,9.5 41,11.5 43.5,12 41.7,14 44,15 42,16.8 44,18.2 41.8,19.6 43.7,21.3 41.2,22.3 42.7,24.3 40,24.6 41,26.8 38.4,26.2 38.2,28.3 36,26.6 33,26" fill="#111"/><polygon points="32,17 31,13 30,10.8 28,9.3 25.3,11 27.8,11.6 28.3,13.5 29.5,17" fill="#111"/><polygon points="32,17 33,13 34,10.8 36,9.3 38.7,11 36.2,11.6 35.7,13.5 34.5,17" fill="#111"/><polygon points="31,26.5 27,29.5 23.8,29.5 25,31 23,33 26,32.3 26.3,34.8 28,32 31,30.5" fill="#111"/><polygon points="33,26.5 37,29.5 40.2,29.5 39,31 41,33 38,32.3 37.7,34.8 36,32 33,30.5" fill="#111"/><polygon points="32,27 30,29 29,32.5 30.2,32.5 29.6,35.8 31,34.8 32,39" fill="#111"/><polygon points="32,27 34,29 35,32.5 33.8,32.5 34.4,35.8 33,34.8 32,39" fill="#111"/></svg><rect x="1" y="1" width="64" height="3.500" fill="url(#glT)"/><rect x="1" y="45" width="64" height="4" fill="url(#glB)"/><rect x="1" y="1" width="3" height="48" fill="url(#glL)"/><rect x="60" y="1" width="5" height="48" fill="url(#glR)"/><rect x=".5" y=".5" width="65" height="49" fill="none" stroke="#284f9c" stroke-width="1"/></svg>
<div class="lbl" style="left:388px;top:220.0px"><span style="letter-spacing:0.03px;margin-left:0px">Албания</span></div>
<svg class="flag" style="left:509px;top:150px" width="66" height="50" viewBox="0 0 66 50"><svg x="1" y="1" width="64" height="48" viewBox="0 0 64 48" overflow="hidden"><rect x="0" y="0" width="32" height="48" fill="#0a9646"/><rect x="32" y="0" width="32" height="48" fill="#fff"/><path d="M39.500 13.400a12 12 0 1 0 0 21.200a9.600 9.600 0 1 1 0-21.200z" fill="#e1162c"/><polygon points="32.90,24.00 36.77,22.74 36.77,18.67 39.16,21.97 43.03,20.71 40.64,24.00 43.03,27.29 39.16,26.03 36.77,29.33 36.77,25.26" fill="#e1162c"/></svg><rect x="1" y="1" width="64" height="3.500" fill="url(#glT)"/><rect x="1" y="45" width="64" height="4" fill="url(#glB)"/><rect x="1" y="1" width="3" height="48" fill="url(#glL)"/><rect x="60" y="1" width="5" height="48" fill="url(#glR)"/><rect x=".5" y=".5" width="65" height="49" fill="none" stroke="#284f9c" stroke-width="1"/></svg>
<div class="lbl" style="left:509px;top:220.0px"><span style="letter-spacing:0.50px;margin-left:0px">Алжир</span></div>
<svg class="flag" style="left:626px;top:150px" width="66" height="50" viewBox="0 0 66 50"><svg x="1" y="1" width="64" height="48" viewBox="0 0 64 48" overflow="hidden"><rect x="0" y="0" width="64" height="48" fill="#0c2c9c"/><path d="M64 -.5L1.500 24L64 48.500z" fill="#e0142a"/><path d="M64 1.900L6.800 24L64 46.100z" fill="#fff"/><path d="M62 8.500l-6 3.500-5 5-1 4.500 3 3 2 6 2.200 3 1.800-3.500 1-6-1-6 3-4z" fill="#9a7838"/><path d="M60 10l-5 4-3 5 2 2z" fill="#6e5424"/><path d="M47.500 22l2 13M49 35l10-1.500M50 30l5 8M47 27l4 2" stroke="#a9aa34" stroke-width="1.600" fill="none"/></svg><rect x="1" y="1" width="64" height="3.500" fill="url(#glT)"/><rect x="1" y="45" width="64" height="4" fill="url(#glB)"/><rect x="1" y="1" width="3" height="48" fill="url(#glL)"/><rect x="60" y="1" width="5" height="48" fill="url(#glR)"/><rect x=".5" y=".5" width="65" height="49" fill="none" stroke="#284f9c" stroke-width="1"/></svg>
<div class="lbl" style="left:626px;top:209.5px"><span style="letter-spacing:0.39px;margin-left:0px">Американское</span><br><span style="letter-spacing:-0.26px;margin-left:-0.8px">Самоа</span></div>
<svg class="flag" style="left:745px;top:150px" width="66" height="50" viewBox="0 0 66 50"><svg x="1" y="1" width="64" height="48" viewBox="0 0 64 48" overflow="hidden"><rect x="0" y="0" width="21" height="48" fill="#14308a"/><rect x="20.8" y="0" width="24.4" height="48" fill="#ffee00"/><rect x="45" y="0" width="19" height="48" fill="#e80a1e"/><path d="M25 15l1.500-1.500 2 1 1.500-1.500 2 1.200 2-1.200 1.500 1.500 2-1 1.500 1.500 1.500 1-1 2 1 2-1 2 1 2-1 2 .5 3-3 3-3 1-1 2.500h-2l-1-2.500-3-1-3-3 .5-3-1-2 1-2-1-2 1-2-1-2z" fill="#c59a5c"/><rect x="27" y="17.500" width="5" height="6.500" fill="#d8281e"/><rect x="28.300" y="18.500" width="2.200" height="4" fill="#fff"/><rect x="32.500" y="17.500" width="5" height="6.500" fill="#f08a14"/><path d="M33.700 17.500v6.500M36 17.500v6.500" stroke="#d8281e" stroke-width=".7"/><rect x="27" y="24.500" width="5" height="7" fill="#f08a14"/><path d="M28.300 24.500v7M30.500 24.500v7" stroke="#f8c828" stroke-width=".7"/><rect x="32.500" y="24.500" width="5" height="7" fill="#f08a14"/><path d="M33.500 27h3M33.500 29.500h3" stroke="#c8281e" stroke-width="1.200"/></svg><rect x="1" y="1" width="64" height="3.500" fill="url(#glT)"/><rect x="1" y="45" width="64" height="4" fill="url(#glB)"/><rect x="1" y="1" width="3" height="48" fill="url(#glL)"/><rect x="60" y="1" width="5" height="48" fill="url(#glR)"/><rect x=".5" y=".5" width="65" height="49" fill="none" stroke="#284f9c" stroke-width="1"/></svg>
<div class="lbl" style="left:745px;top:220.0px"><span style="letter-spacing:0.43px;margin-left:0px">Андорра</span></div>
<svg class="flag" style="left:953px;top:150px" width="66" height="50" viewBox="0 0 66 50"><svg x="1" y="1" width="64" height="48" viewBox="0 0 64 48" overflow="hidden"><rect x="0" y="0.00" width="64" height="24.30" fill="#ff0808"/><rect x="0" y="24.00" width="64" height="24.30" fill="#000"/><path d="M31.200 12.800A10 10 0 1 1 25.300 31.500" fill="none" stroke="#f8e020" stroke-width="2.300"/><path d="M31.300 11.500A11.300 11.300 0 1 1 24.650 32.600" fill="none" stroke="#f8e020" stroke-width="1.500" stroke-dasharray="1.500 1.700"/><path d="M25.300 31.500l-2.500 .8 .6 2.200 2.800 .6z" fill="#f8e020"/><polygon points="29.30,16.30 30.04,18.58 32.44,18.58 30.50,19.99 31.24,22.27 29.30,20.86 27.36,22.27 28.10,19.99 26.16,18.58 28.56,18.58" fill="#f8e020"/><path d="M24.300 23.200q.8 3 4.500 7t12.800 9.300q-.5 1.200-1.500 .8-8-4-12.300-8.800t-4.500-7.800z" fill="#f0e828"/></svg><rect x="1" y="1" width="64" height="3.500" fill="url(#glT)"/><rect x="1" y="45" width="64" height="4" fill="url(#glB)"/><rect x="1" y="1" width="3" height="48" fill="url(#glL)"/><rect x="60" y="1" width="5" height="48" fill="url(#glR)"/><rect x=".5" y=".5" width="65" height="49" fill="none" stroke="#284f9c" stroke-width="1"/></svg>
<div class="lbl" style="left:953px;top:220.0px"><span style="letter-spacing:0.25px;margin-left:0px">Ангола</span></div>
<svg class="flag" style="left:1118px;top:150px" width="66" height="50" viewBox="0 0 66 50"><svg x="1" y="1" width="64" height="48" viewBox="0 0 64 48" overflow="hidden"><rect x="0" y="0" width="64" height="48" fill="#4060aa"/><svg x="0" y="0" width="32" height="24.5" viewBox="0 0 32 24.5" overflow="hidden"><rect width="32" height="24.5" fill="#1f2f86"/><path d="M0 0L32 24.5M32 0L0 24.5" stroke="#fff" stroke-width="4.90"/><path d="M0 0L32 24.5M32 0L0 24.5" stroke="#e01a24" stroke-width="1.72"/><path d="M16.0 0V24.5M0 12.25H32" stroke="#fff" stroke-width="7.84"/><path d="M16.0 0V24.5M0 12.25H32" stroke="#e8141e" stroke-width="4.41"/></svg><path d="M40.400 11.500q3.500 1.500 7.100-1 3.600 2.500 7.100 1v13q0 8.500-7.100 12.300-7.100-3.800-7.100-12.300z" fill="#fdfdfd"/><path d="M41.600 30.500q5.900-1.500 11.800 0-1.400 3.800-5.900 6-4.500-2.200-5.900-6z" fill="#d8ecf8"/><path transform="rotate(0 47.400 21)" d="M45.800 15.600q6.200-.6 6.400 5.600-.3 1.600-1.600 2.300.4-4.600-4.800-5.400z" fill="#c8742e"/><path transform="rotate(120 47.400 21)" d="M45.800 15.600q6.200-.6 6.400 5.600-.3 1.600-1.600 2.300.4-4.600-4.800-5.400z" fill="#c8742e"/><path transform="rotate(240 47.400 21)" d="M45.800 15.600q6.200-.6 6.400 5.600-.3 1.600-1.600 2.300.4-4.600-4.800-5.400z" fill="#c8742e"/></svg><rect x="1" y="1" width="64" height="3.500" fill="url(#glT)"/><rect x="1" y="45" width="64" height="4" fill="url(#glB)"/><rect x="1" y="1" width="3" height="48" fill="url(#glL)"/><rect x="60" y="1" width="5" height="48" fill="url(#glR)"/><rect x=".5" y=".5" width="65" height="49" fill="none" stroke="#284f9c" stroke-width="1"/></svg>
<div class="lbl" style="left:1118px;top:220.0px"><span style="letter-spacing:0.21px;margin-left:0px">Ангилья</span></div>
<svg class="flag" style="left:1231px;top:150px" width="66" height="50" viewBox="0 0 66 50"><svg x="1" y="1" width="64" height="48" viewBox="0 0 64 48" overflow="hidden"><rect x="0" y="0" width="64" height="48" fill="#ff6a00"/><path d="M18.400 5L7.300 29.500h22.200z" fill="none" stroke="#fff" stroke-width="2.600" stroke-linejoin="miter"/><path d="M13 19.500h11" stroke="#fff" stroke-width="3.200"/><path d="M5.800 31h25.200l-1.600 4.300-6 7.400h-4.100v-5.500h-1.800v5.500h-4.100l-6-7.400z" fill="#fff"/><path d="M8.500 34.200q9.900 5.600 19.800 0" fill="none" stroke="#ff6a00" stroke-width="1.300"/></svg><rect x=".5" y=".5" width="65" height="49" fill="none" stroke="#2a4f86" stroke-width="1"/></svg>
<div class="lbl" style="left:1231px;top:220.0px"><span style="letter-spacing:0.49px;margin-left:0px">Антарктика</span></div>
<svg class="flag" style="left:240px;top:254px" width="66" height="50" viewBox="0 0 66 50"><svg x="1" y="1" width="64" height="48" viewBox="0 0 64 48" overflow="hidden"><rect x="0" y="0" width="64" height="48" fill="#e8141e"/><path d="M0 0H64L32 48z" fill="#000"/><path d="M12.500 19H51.500L32 48z" fill="#2a6fc8"/><path d="M19.500 29.500H44.500L32 48z" fill="#fff"/><clipPath id="agc"><rect x="0" y="0" width="64" height="19"/></clipPath><g clip-path="url(#agc)"><polygon points="32.00,6.00 33.37,12.13 36.97,6.99 35.89,13.18 41.19,9.81 37.82,15.11 44.01,14.03 38.87,17.63 45.00,19.00 38.87,20.37 44.01,23.97 37.82,22.89 41.19,28.19 35.89,24.82 36.97,31.01 33.37,25.87 32.00,32.00 30.63,25.87 27.03,31.01 28.11,24.82 22.81,28.19 26.18,22.89 19.99,23.97 25.13,20.37 19.00,19.00 25.13,17.63 19.99,14.03 26.18,15.11 22.81,9.81 28.11,13.18 27.03,6.99 30.63,12.13" fill="#ffe000"/></g></svg><rect x="1" y="1" width="64" height="3.500" fill="url(#glT)"/><rect x="1" y="45" width="64" height="4" fill="url(#glB)"/><rect x="1" y="1" width="3" height="48" fill="url(#glL)"/><rect x="60" y="1" width="5" height="48" fill="url(#glR)"/><rect x=".5" y=".5" width="65" height="49" fill="none" stroke="#284f9c" stroke-width="1"/></svg>
<div class="lbl" style="left:240px;top:313.0px"><span style="letter-spacing:0.22px;margin-left:0px">Антигуа и Барбуда</span></div>
<svg class="flag" style="left:388px;top:254px" width="66" height="50" viewBox="0 0 66 50"><svg x="1" y="1" width="64" height="48" viewBox="0 0 64 48" overflow="hidden"><rect x="0" y="0.00" width="64" height="16.30" fill="#7fcaf7"/><rect x="0" y="16.00" width="64" height="16.30" fill="#fff"/><rect x="0" y="32.00" width="64" height="16.30" fill="#7fcaf7"/><circle cx="32" cy="24" r="3.800" fill="#f6c22a" stroke="#d69a1a" stroke-width=".7"/></svg><rect x="1" y="1" width="64" height="3.500" fill="url(#glT)"/><rect x="1" y="45" width="64" height="4" fill="url(#glB)"/><rect x="1" y="1" width="3" height="48" fill="url(#glL)"/><rect x="60" y="1" width="5" height="48" fill="url(#glR)"/><rect x=".5" y=".5" width="65" height="49" fill="none" stroke="#284f9c" stroke-width="1"/></svg>
<div class="lbl" style="left:388px;top:313.0px"><span style="letter-spacing:0.38px;margin-left:0px">Аргентина</span></div>
<svg class="flag" style="left:509px;top:254px" width="66" height="50" viewBox="0 0 66 50"><svg x="1" y="1" width="64" height="48" viewBox="0 0 64 48" overflow="hidden"><rect x="0" y="0.00" width="64" height="16.30" fill="#e0141e"/><rect x="0" y="16.00" width="64" height="16.30" fill="#1c3fa8"/><rect x="0" y="32.00" width="64" height="16.30" fill="#f59a14"/></svg><rect x="1" y="1" width="64" height="3.500" fill="url(#glT)"/><rect x="1" y="45" width="64" height="4" fill="url(#glB)"/><rect x="1" y="1" width="3" height="48" fill="url(#glL)"/><rect x="60" y="1" width="5" height="48" fill="url(#glR)"/><rect x=".5" y=".5" width="65" height="49" fill="none" stroke="#284f9c" stroke-width="1"/></svg>
<div class="lbl" style="left:509px;top:313.0px"><span style="letter-spacing:0.34px;margin-left:0px">Армения</span></div>
<svg class="flag" style="left:626px;top:254px" width="66" height="50" viewBox="0 0 66 50"><svg x="1" y="1" width="64" height="48" viewBox="0 0 64 48" overflow="hidden"><rect x="0" y="0" width="64" height="48" fill="#a9d3f3"/><rect x="0" y="31.5" width="64" height="2" fill="#f8e83a"/><rect x="0" y="36" width="64" height="2" fill="#f8e83a"/><path d="M13.500 4.500l2.400 6.600 6.600 2.400-6.600 2.400-2.400 6.600-2.400-6.600-6.600-2.400 6.600-2.400z" fill="#e0141e" stroke="#fff" stroke-width=".9"/></svg><rect x="1" y="1" width="64" height="3.500" fill="url(#glT)"/><rect x="1" y="45" width="64" height="4" fill="url(#glB)"/><rect x="1" y="1" width="3" height="48" fill="url(#glL)"/><rect x="60" y="1" width="5" height="48" fill="url(#glR)"/><rect x=".5" y=".5" width="65" height="49" fill="none" stroke="#284f9c" stroke-width="1"/></svg>
<div class="lbl" style="left:626px;top:313.0px"><span style="letter-spacing:0.39px;margin-left:0px">Аруба</span></div>
<svg class="flag" style="left:745px;top:254px" width="66" height="50" viewBox="0 0 66 50"><svg x="1" y="1" width="64" height="48" viewBox="0 0 64 48" overflow="hidden"><rect x="0" y="0" width="64" height="48" fill="#1f2f86"/><svg x="0" y="0" width="32" height="24" viewBox="0 0 32 24" overflow="hidden"><rect width="32" height="24" fill="#1f2f86"/><path d="M0 0L32 24M32 0L0 24" stroke="#fff" stroke-width="4.80"/><path d="M0 0L32 24M32 0L0 24" stroke="#e01a24" stroke-width="1.68"/><path d="M16.0 0V24M0 12.0H32" stroke="#fff" stroke-width="7.68"/><path d="M16.0 0V24M0 12.0H32" stroke="#e8141e" stroke-width="4.32"/></svg><polygon points="16.00,30.50 17.08,33.75 20.30,32.57 18.44,35.44 21.36,37.22 17.95,37.56 18.39,40.96 16.00,38.50 13.61,40.96 14.05,37.56 10.64,37.22 13.56,35.44 11.70,32.57 14.92,33.75" fill="#fff"/><polygon points="48.00,38.00 48.61,39.74 50.35,39.13 49.36,40.69 50.92,41.67 49.09,41.87 49.30,43.70 48.00,42.40 46.70,43.70 46.91,41.87 45.08,41.67 46.64,40.69 45.65,39.13 47.39,39.74" fill="#fff"/><polygon points="40.00,19.00 40.61,20.74 42.35,20.13 41.36,21.69 42.92,22.67 41.09,22.87 41.30,24.70 40.00,23.40 38.70,24.70 38.91,22.87 37.08,22.67 38.64,21.69 37.65,20.13 39.39,20.74" fill="#fff"/><polygon points="48.00,5.00 48.61,6.74 50.35,6.13 49.36,7.69 50.92,8.67 49.09,8.87 49.30,10.70 48.00,9.40 46.70,10.70 46.91,8.87 45.08,8.67 46.64,7.69 45.65,6.13 47.39,6.74" fill="#fff"/><polygon points="56.00,15.00 56.61,16.74 58.35,16.13 57.36,17.69 58.92,18.67 57.09,18.87 57.30,20.70 56.00,19.40 54.70,20.70 54.91,18.87 53.08,18.67 54.64,17.69 53.65,16.13 55.39,16.74" fill="#fff"/><polygon points="51.00,24.30 51.38,25.47 52.62,25.47 51.62,26.20 52.00,27.38 51.00,26.65 50.00,27.38 50.38,26.20 49.38,25.47 50.62,25.47" fill="#fff"/></svg><rect x="1" y="1" width="64" height="3.500" fill="url(#glT)"/><rect x="1" y="45" width="64" height="4" fill="url(#glB)"/><rect x="1" y="1" width="3" height="48" fill="url(#glL)"/><rect x="60" y="1" width="5" height="48" fill="url(#glR)"/><rect x=".5" y=".5" width="65" height="49" fill="none" stroke="#284f9c" stroke-width="1"/></svg>
<div class="lbl" style="left:745px;top:313.0px"><span style="letter-spacing:-0.08px;margin-left:0px">Австралия</span></div>
<svg class="flag" style="left:953px;top:254px" width="66" height="50" viewBox="0 0 66 50"><svg x="1" y="1" width="64" height="48" viewBox="0 0 64 48" overflow="hidden"><rect x="0" y="0.00" width="64" height="16.30" fill="#e8142a"/><rect x="0" y="16.00" width="64" height="16.30" fill="#fff"/><rect x="0" y="32.00" width="64" height="16.30" fill="#e8142a"/></svg><rect x="1" y="1" width="64" height="3.500" fill="url(#glT)"/><rect x="1" y="45" width="64" height="4" fill="url(#glB)"/><rect x="1" y="1" width="3" height="48" fill="url(#glL)"/><rect x="60" y="1" width="5" height="48" fill="url(#glR)"/><rect x=".5" y=".5" width="65" height="49" fill="none" stroke="#284f9c" stroke-width="1"/></svg>
<div class="lbl" style="left:953px;top:313.0px"><span style="letter-spacing:0.13px;margin-left:0px">Австрия</span></div>
<svg class="flag" style="left:1118px;top:254px" width="66" height="50" viewBox="0 0 66 50"><svg x="1" y="1" width="64" height="48" viewBox="0 0 64 48" overflow="hidden"><rect x="0" y="0.00" width="64" height="16.30" fill="#1ea0e0"/><rect x="0" y="16.00" width="64" height="16.30" fill="#e8142a"/><rect x="0" y="32.00" width="64" height="16.30" fill="#4aa82a"/><circle cx="30" cy="24" r="6.500" fill="#fff"/><circle cx="32" cy="24" r="5.300" fill="#e8142a"/><polygon points="37.00,20.80 37.61,22.52 39.26,21.74 38.48,23.39 40.20,24.00 38.48,24.61 39.26,26.26 37.61,25.48 37.00,27.20 36.39,25.48 34.74,26.26 35.52,24.61 33.80,24.00 35.52,23.39 34.74,21.74 36.39,22.52" fill="#fff"/></svg><rect x="1" y="1" width="64" height="3.500" fill="url(#glT)"/><rect x="1" y="45" width="64" height="4" fill="url(#glB)"/><rect x="1" y="1" width="3" height="48" fill="url(#glL)"/><rect x="60" y="1" width="5" height="48" fill="url(#glR)"/><rect x=".5" y=".5" width="65" height="49" fill="none" stroke="#284f9c" stroke-width="1"/></svg>
<div class="lbl" style="left:1118px;top:313.0px"><span style="letter-spacing:0.43px;margin-left:0px">Азербайджан</span></div>
<svg class="flag" style="left:1231px;top:254px" width="66" height="50" viewBox="0 0 66 50"><svg x="1" y="1" width="64" height="48" viewBox="0 0 64 48" overflow="hidden"><rect x="0" y="0.00" width="64" height="16.30" fill="#1ea8d8"/><rect x="0" y="16.00" width="64" height="16.30" fill="#fff000"/><rect x="0" y="32.00" width="64" height="16.30" fill="#1ea8d8"/><path d="M0 0L37 24L0 48z" fill="#000"/></svg><rect x="1" y="1" width="64" height="3.500" fill="url(#glT)"/><rect x="1" y="45" width="64" height="4" fill="url(#glB)"/><rect x="1" y="1" width="3" height="48" fill="url(#glL)"/><rect x="60" y="1" width="5" height="48" fill="url(#glR)"/><rect x=".5" y=".5" width="65" height="49" fill="none" stroke="#284f9c" stroke-width="1"/></svg>
<div class="lbl" style="left:1231px;top:313.0px"><span style="letter-spacing:0.14px;margin-left:-0.8px">Багамские Острова</span></div>
<svg class="flag" style="left:240px;top:337px" width="66" height="50" viewBox="0 0 66 50"><svg x="1" y="1" width="64" height="48" viewBox="0 0 64 48" overflow="hidden"><rect x="0" y="0" width="64" height="48" fill="#f0141e"/><path d="M0 0H16L24 4.800 16 9.600 24 14.400 16 19.200 24 24 16 28.800 24 33.600 16 38.400 24 43.200 16 48H0z" fill="#fff"/></svg><rect x="1" y="1" width="64" height="3.500" fill="url(#glT)"/><rect x="1" y="45" width="64" height="4" fill="url(#glB)"/><rect x="1" y="1" width="3" height="48" fill="url(#glL)"/><rect x="60" y="1" width="5" height="48" fill="url(#glR)"/><rect x=".5" y=".5" width="65" height="49" fill="none" stroke="#284f9c" stroke-width="1"/></svg>
<div class="lbl" style="left:240px;top:396.0px"><span style="letter-spacing:-0.02px;margin-left:-0.8px">Бахрейн</span></div>
<svg class="flag" style="left:388px;top:337px" width="66" height="50" viewBox="0 0 66 50"><svg x="1" y="1" width="64" height="48" viewBox="0 0 64 48" overflow="hidden"><rect x="0" y="0" width="64" height="48" fill="#0a7a1e"/><circle cx="29" cy="24" r="13.500" fill="#c8000a"/></svg><rect x="1" y="1" width="64" height="3.500" fill="url(#glT)"/><rect x="1" y="45" width="64" height="4" fill="url(#glB)"/><rect x="1" y="1" width="3" height="48" fill="url(#glL)"/><rect x="60" y="1" width="5" height="48" fill="url(#glR)"/><rect x=".5" y=".5" width="65" height="49" fill="none" stroke="#284f9c" stroke-width="1"/></svg>
<div class="lbl" style="left:388px;top:396.0px"><span style="letter-spacing:0.01px;margin-left:-0.8px">Бангладеш</span></div>
<svg class="flag" style="left:509px;top:337px" width="66" height="50" viewBox="0 0 66 50"><svg x="1" y="1" width="64" height="48" viewBox="0 0 64 48" overflow="hidden"><rect x="0.00" y="0" width="21.63" height="48" fill="#0e2c9c"/><rect x="21.33" y="0" width="21.63" height="48" fill="#ffc814"/><rect x="42.67" y="0" width="21.63" height="48" fill="#0e2c9c"/><path d="M32 13v23M25.500 16q.5 10 6.500 10 6 0 6.500-10M29 32.500h6" stroke="#000" stroke-width="2.200" fill="none"/><path d="M32 10l-2.400 5h4.800zM25.500 12.500l-2.400 5h4.800zM38.500 12.500l-2.400 5h4.800z" fill="#000"/></svg><rect x="1" y="1" width="64" height="3.500" fill="url(#glT)"/><rect x="1" y="45" width="64" height="4" fill="url(#glB)"/><rect x="1" y="1" width="3" height="48" fill="url(#glL)"/><rect x="60" y="1" width="5" height="48" fill="url(#glR)"/><rect x=".5" y=".5" width="65" height="49" fill="none" stroke="#284f9c" stroke-width="1"/></svg>
<div class="lbl" style="left:509px;top:396.0px"><span style="letter-spacing:-0.02px;margin-left:-0.8px">Барбадос</span></div>
<svg class="flag" style="left:626px;top:337px" width="66" height="50" viewBox="0 0 66 50"><svg x="1" y="1" width="64" height="48" viewBox="0 0 64 48" overflow="hidden"><rect x="0" y="0" width="64" height="32" fill="#e8241e"/><rect x="0" y="32" width="64" height="16" fill="#4a9a2a"/><rect x="0" y="0" width="7" height="48" fill="#fff"/><path d="M1 0v48M3.500 0v48M6 0v48" stroke="#d8241e" stroke-width="1.400" stroke-dasharray="1.500 1.500"/></svg><rect x="1" y="1" width="64" height="3.500" fill="url(#glT)"/><rect x="1" y="45" width="64" height="4" fill="url(#glB)"/><rect x="1" y="1" width="3" height="48" fill="url(#glL)"/><rect x="60" y="1" width="5" height="48" fill="url(#glR)"/><rect x=".5" y=".5" width="65" height="49" fill="none" stroke="#284f9c" stroke-width="1"/></svg>
<div class="lbl" style="left:626px;top:396.0px"><span style="letter-spacing:-0.09px;margin-left:-0.8px">Беларусь</span></div>
<svg class="flag" style="left:745px;top:337px" width="66" height="50" viewBox="0 0 66 50"><svg x="1" y="1" width="64" height="48" viewBox="0 0 64 48" overflow="hidden"><rect x="0.00" y="0" width="21.63" height="48" fill="#000"/><rect x="21.33" y="0" width="21.63" height="48" fill="#fff000"/><rect x="42.67" y="0" width="21.63" height="48" fill="#f0141e"/></svg><rect x="1" y="1" width="64" height="3.500" fill="url(#glT)"/><rect x="1" y="45" width="64" height="4" fill="url(#glB)"/><rect x="1" y="1" width="3" height="48" fill="url(#glL)"/><rect x="60" y="1" width="5" height="48" fill="url(#glR)"/><rect x=".5" y=".5" width="65" height="49" fill="none" stroke="#284f9c" stroke-width="1"/></svg>
<div class="lbl" style="left:745px;top:396.0px"><span style="letter-spacing:-0.15px;margin-left:-0.8px">Бельгия</span></div>
<svg class="flag" style="left:953px;top:337px" width="66" height="50" viewBox="0 0 66 50"><svg x="1" y="1" width="64" height="48" viewBox="0 0 64 48" overflow="hidden"><rect x="0" y="0" width="64" height="48" fill="#ec4a2e"/><rect x="0" y="5" width="64" height="38" fill="#3232a2"/><circle cx="32" cy="23.800" r="13" fill="#fff" stroke="#1c1c74" stroke-width=".9"/><circle cx="32" cy="23.800" r="10.900" fill="none" stroke="#52a838" stroke-width="1.700" stroke-dasharray="1.200 .9"/><circle cx="32" cy="18.600" r="1.900" fill="#1e8a28"/><path d="M32 20v3" stroke="#7a5a2a" stroke-width=".8"/><path d="M26.500 24.500q.3-4.500 2-4.500t2 4.500z" fill="#d8b04a"/><circle cx="28.500" cy="19.800" r="1.100" fill="#d8b04a"/><path d="M33.500 24.500q.3-4.500 2-4.500t2 4.500z" fill="#5a4030"/><circle cx="35.500" cy="19.800" r="1.100" fill="#5a4030"/><path d="M29 23l6 5M35 23l-6 5" stroke="#e8d040" stroke-width=".7"/><circle cx="32" cy="28.300" r="2.300" fill="#2a5ab8"/><path d="M30.500 28.500q1.500-1.500 3 0" stroke="#fff" stroke-width=".7" fill="none"/><path d="M28 32.500q4 1.800 8 0" stroke="#9aa4b8" stroke-width="1" fill="none"/></svg><rect x="1" y="1" width="64" height="3.500" fill="url(#glT)"/><rect x="1" y="45" width="64" height="4" fill="url(#glB)"/><rect x="1" y="1" width="3" height="48" fill="url(#glL)"/><rect x="60" y="1" width="5" height="48" fill="url(#glR)"/><rect x=".5" y=".5" width="65" height="49" fill="none" stroke="#284f9c" stroke-width="1"/></svg>
<div class="lbl" style="left:953px;top:396.0px"><span style="letter-spacing:-0.20px;margin-left:-0.8px">Белиз</span></div>
<svg class="flag" style="left:1118px;top:337px" width="66" height="50" viewBox="0 0 66 50"><svg x="1" y="1" width="64" height="48" viewBox="0 0 64 48" overflow="hidden"><rect x="0" y="0" width="26" height="48" fill="#3a7a2a"/><rect x="26" y="0" width="38" height="24" fill="#ffff00"/><rect x="26" y="24" width="38" height="24" fill="#ff0a0a"/></svg><rect x="1" y="1" width="64" height="3.500" fill="url(#glT)"/><rect x="1" y="45" width="64" height="4" fill="url(#glB)"/><rect x="1" y="1" width="3" height="48" fill="url(#glL)"/><rect x="60" y="1" width="5" height="48" fill="url(#glR)"/><rect x=".5" y=".5" width="65" height="49" fill="none" stroke="#284f9c" stroke-width="1"/></svg>
<div class="lbl" style="left:1118px;top:396.0px"><span style="letter-spacing:0.14px;margin-left:-0.8px">Бенин</span></div>
<svg class="flag" style="left:1231px;top:337px" width="66" height="50" viewBox="0 0 66 50"><svg x="1" y="1" width="64" height="48" viewBox="0 0 64 48" overflow="hidden"><rect x="0" y="0" width="64" height="48" fill="#d4143c"/><svg x="0" y="0" width="32" height="25" viewBox="0 0 32 25" overflow="hidden"><rect width="32" height="25" fill="#1f2f86"/><path d="M0 0L32 25M32 0L0 25" stroke="#fff" stroke-width="5.00"/><path d="M0 0L32 25M32 0L0 25" stroke="#e01a24" stroke-width="1.75"/><path d="M16.0 0V25M0 12.5H32" stroke="#fff" stroke-width="8.00"/><path d="M16.0 0V25M0 12.5H32" stroke="#e8141e" stroke-width="4.50"/></svg><path d="M41 12h15v14q0 8-7.500 11Q41 34 41 26z" fill="#fff"/><path d="M45 28q1-9 3.500-12 2.500 3 3.500 12z" fill="#d8283c"/><path d="M46.500 22h4" stroke="#fff" stroke-width="1"/><path d="M42 30q6.500-3.500 13 0-1.500 4.500-6.500 6.500-5-2-6.500-6.500z" fill="#3a9a4a"/></svg><rect x="1" y="1" width="64" height="3.500" fill="url(#glT)"/><rect x="1" y="45" width="64" height="4" fill="url(#glB)"/><rect x="1" y="1" width="3" height="48" fill="url(#glL)"/><rect x="60" y="1" width="5" height="48" fill="url(#glR)"/><rect x=".5" y=".5" width="65" height="49" fill="none" stroke="#284f9c" stroke-width="1"/></svg>
<div class="lbl" style="left:1231px;top:396.0px"><span style="letter-spacing:0.20px;margin-left:-0.8px">Бермудские Острова</span></div>
<svg class="flag" style="left:240px;top:420px" width="66" height="50" viewBox="0 0 66 50"><svg x="1" y="1" width="64" height="48" viewBox="0 0 64 48" overflow="hidden"><path d="M0 0H64L0 48z" fill="#fad23c"/><path d="M64 0V48H0z" fill="#f0722e"/><g fill="none" stroke="#fff" stroke-linecap="round" stroke-linejoin="round"><path d="M11 40.500q8-5 12.500-8 -.5-8.500 6-9 6-.5 9 2.500 1.500-5.500-2.500-9 .5-6 7.500-6 4 0 7 .5" stroke-width="3.300"/><path d="M45 13.500l5 6M39 26.500l6 6.500M25 32l4 1M24.500 34l2.500 5.500M52 9l2.500-2" stroke-width="1.800"/></g><g fill="#fff"><circle cx="50.500" cy="20.500" r="2.400"/><circle cx="45.500" cy="33.500" r="2.600"/><circle cx="29.500" cy="32.500" r="2.300"/><circle cx="27.300" cy="40" r="2.400"/></g><path d="M44 11l4.500 3.500 3-2.500M46 16.500l3.500-1.500" stroke="#fff" stroke-width="1.800" fill="none" stroke-linecap="round"/><circle cx="44.500" cy="17" r="1.300" fill="#f0722e"/></svg><rect x="1" y="1" width="64" height="3.500" fill="url(#glT)"/><rect x="1" y="45" width="64" height="4" fill="url(#glB)"/><rect x="1" y="1" width="3" height="48" fill="url(#glL)"/><rect x="60" y="1" width="5" height="48" fill="url(#glR)"/><rect x=".5" y=".5" width="65" height="49" fill="none" stroke="#284f9c" stroke-width="1"/></svg>
<div class="lbl" style="left:240px;top:500.0px"><span style="letter-spacing:0.12px;margin-left:-0.8px">Бутан</span></div>
<svg class="flag" style="left:388px;top:420px" width="66" height="50" viewBox="0 0 66 50"><svg x="1" y="1" width="64" height="48" viewBox="0 0 64 48" overflow="hidden"><rect x="0" y="0.00" width="64" height="16.30" fill="#e01c1c"/><rect x="0" y="16.00" width="64" height="16.30" fill="#ffd400"/><rect x="0" y="32.00" width="64" height="16.30" fill="#00803a"/><ellipse cx="32" cy="25" rx="5.800" ry="6.600" fill="none" stroke="#cc5020" stroke-width="2.200"/><path d="M27 30.500l-1 1.500M37 30.500l1 1.500" stroke="#cc5020" stroke-width="1.400"/><ellipse cx="32" cy="25" rx="3" ry="4.300" fill="#9accea" stroke="#3a7a5a" stroke-width=".7"/><path d="M30.500 27.500q1.500-4 3 0z" fill="#5a8a4a"/><circle cx="32" cy="23" r="1" fill="#fff"/><path d="M28.800 17.200L32 20l3.200-2.800" stroke="#3a2818" stroke-width="1.600" fill="none"/></svg><rect x="1" y="1" width="64" height="3.500" fill="url(#glT)"/><rect x="1" y="45" width="64" height="4" fill="url(#glB)"/><rect x="1" y="1" width="3" height="48" fill="url(#glL)"/><rect x="60" y="1" width="5" height="48" fill="url(#glR)"/><rect x=".5" y=".5" width="65" height="49" fill="none" stroke="#284f9c" stroke-width="1"/></svg>
<div class="lbl" style="left:388px;top:500.0px"><span style="letter-spacing:-0.03px;margin-left:-0.8px">Боливия</span></div>
<svg class="flag" style="left:509px;top:420px" width="66" height="50" viewBox="0 0 66 50"><svg x="1" y="1" width="64" height="48" viewBox="0 0 64 48" overflow="hidden"><rect x="0" y="0" width="64" height="48" fill="#0c1c9c"/><path d="M20 0H52V48z" fill="#ffcc14"/><polygon points="16.50,-3.20 17.11,-1.33 19.07,-1.33 17.48,-0.18 18.09,1.68 16.50,0.53 14.91,1.68 15.52,-0.18 13.93,-1.33 15.89,-1.33" fill="#fff"/><polygon points="21.05,3.10 21.66,4.97 23.62,4.97 22.03,6.12 22.64,7.98 21.05,6.83 19.46,7.98 20.07,6.12 18.48,4.97 20.44,4.97" fill="#fff"/><polygon points="25.60,9.40 26.21,11.27 28.17,11.27 26.58,12.42 27.19,14.28 25.60,13.13 24.01,14.28 24.62,12.42 23.03,11.27 24.99,11.27" fill="#fff"/><polygon points="30.15,15.70 30.76,17.57 32.72,17.57 31.13,18.72 31.74,20.58 30.15,19.43 28.56,20.58 29.17,18.72 27.58,17.57 29.54,17.57" fill="#fff"/><polygon points="34.70,22.00 35.31,23.87 37.27,23.87 35.68,25.02 36.29,26.88 34.70,25.73 33.11,26.88 33.72,25.02 32.13,23.87 34.09,23.87" fill="#fff"/><polygon points="39.25,28.30 39.86,30.17 41.82,30.17 40.23,31.32 40.84,33.18 39.25,32.03 37.66,33.18 38.27,31.32 36.68,30.17 38.64,30.17" fill="#fff"/><polygon points="43.80,34.60 44.41,36.47 46.37,36.47 44.78,37.62 45.39,39.48 43.80,38.33 42.21,39.48 42.82,37.62 41.23,36.47 43.19,36.47" fill="#fff"/><polygon points="48.35,40.90 48.96,42.77 50.92,42.77 49.33,43.92 49.94,45.78 48.35,44.63 46.76,45.78 47.37,43.92 45.78,42.77 47.74,42.77" fill="#fff"/><polygon points="52.90,47.20 53.51,49.07 55.47,49.07 53.88,50.22 54.49,52.08 52.90,50.93 51.31,52.08 51.92,50.22 50.33,49.07 52.29,49.07" fill="#fff"/></svg><rect x="1" y="1" width="64" height="3.500" fill="url(#glT)"/><rect x="1" y="45" width="64" height="4" fill="url(#glB)"/><rect x="1" y="1" width="3" height="48" fill="url(#glL)"/><rect x="60" y="1" width="5" height="48" fill="url(#glR)"/><rect x=".5" y=".5" width="65" height="49" fill="none" stroke="#284f9c" stroke-width="1"/></svg>
<div class="lbl" style="left:509px;top:489.5px"><span style="letter-spacing:0.11px;margin-left:-0.8px">Босния и</span><br><span style="letter-spacing:0.46px;margin-left:-0.8px">Герцеговина</span></div>
<svg class="flag" style="left:626px;top:420px" width="66" height="50" viewBox="0 0 66 50"><svg x="1" y="1" width="64" height="48" viewBox="0 0 64 48" overflow="hidden"><rect x="0" y="0" width="64" height="48" fill="#84c4f0"/><rect x="0" y="17" width="64" height="14" fill="#fff"/><rect x="0" y="19.5" width="64" height="9" fill="#000"/></svg><rect x="1" y="1" width="64" height="3.500" fill="url(#glT)"/><rect x="1" y="45" width="64" height="4" fill="url(#glB)"/><rect x="1" y="1" width="3" height="48" fill="url(#glL)"/><rect x="60" y="1" width="5" height="48" fill="url(#glR)"/><rect x=".5" y=".5" width="65" height="49" fill="none" stroke="#284f9c" stroke-width="1"/></svg>
<div class="lbl" style="left:626px;top:500.0px"><span style="letter-spacing:0.03px;margin-left:-0.8px">Ботсвана</span></div>
<svg class="flag" style="left:745px;top:420px" width="66" height="50" viewBox="0 0 66 50"><svg x="1" y="1" width="64" height="48" viewBox="0 0 64 48" overflow="hidden"><rect x="0" y="0" width="64" height="48" fill="#2a9a2a"/><path d="M32 5L59 24 32 43 5 24z" fill="#ffe000"/><circle cx="32" cy="24" r="10.500" fill="#14288a"/><path d="M22 21.500q11-3 20.500 4.500" stroke="#fff" stroke-width="1.800" fill="none"/><g fill="#fff"><circle cx="27" cy="27" r=".7"/><circle cx="31" cy="29" r=".7"/><circle cx="35" cy="30" r=".7"/><circle cx="29" cy="31" r=".6"/><circle cx="37" cy="27" r=".6"/></g></svg><rect x="1" y="1" width="64" height="3.500" fill="url(#glT)"/><rect x="1" y="45" width="64" height="4" fill="url(#glB)"/><rect x="1" y="1" width="3" height="48" fill="url(#glL)"/><rect x="60" y="1" width="5" height="48" fill="url(#glR)"/><rect x=".5" y=".5" width="65" height="49" fill="none" stroke="#284f9c" stroke-width="1"/></svg>
<div class="lbl" style="left:745px;top:500.0px"><span style="letter-spacing:0.05px;margin-left:-0.8px">Бразилия</span></div>
<svg class="flag" style="left:953px;top:420px" width="66" height="50" viewBox="0 0 66 50"><svg x="1" y="1" width="64" height="48" viewBox="0 0 64 48" overflow="hidden"><rect x="0" y="0" width="64" height="48" fill="#fff"/><path d="M-3 5q2.700-3.600 5.400 0t5.400 0q2.700-3.600 5.400 0t5.400 0q2.700-3.600 5.400 0t5.400 0q2.700-3.600 5.400 0t5.400 0q2.700-3.600 5.400 0t5.400 0q2.700-3.600 5.400 0t5.400 0q2.700-3.600 5.400 0t5.400 0" stroke="#1f2f86" stroke-width="3.800" fill="none"/><path d="M-3 13q2.700-3.600 5.400 0t5.400 0q2.700-3.600 5.400 0t5.400 0q2.700-3.600 5.400 0t5.400 0q2.700-3.600 5.400 0t5.400 0q2.700-3.600 5.400 0t5.400 0q2.700-3.600 5.400 0t5.400 0q2.700-3.600 5.400 0t5.400 0" stroke="#1f2f86" stroke-width="3.800" fill="none"/><path d="M-3 21q2.700-3.600 5.400 0t5.400 0q2.700-3.600 5.400 0t5.400 0q2.700-3.600 5.400 0t5.400 0q2.700-3.600 5.400 0t5.400 0q2.700-3.600 5.400 0t5.400 0q2.700-3.600 5.400 0t5.400 0q2.700-3.600 5.400 0t5.400 0" stroke="#1f2f86" stroke-width="3.800" fill="none"/><path d="M-3 29q2.700-3.600 5.400 0t5.400 0q2.700-3.600 5.400 0t5.400 0q2.700-3.600 5.400 0t5.400 0q2.700-3.600 5.400 0t5.400 0q2.700-3.600 5.400 0t5.400 0q2.700-3.600 5.400 0t5.400 0q2.700-3.600 5.400 0t5.400 0" stroke="#1f2f86" stroke-width="3.800" fill="none"/><path d="M-3 37q2.700-3.600 5.400 0t5.400 0q2.700-3.600 5.400 0t5.400 0q2.700-3.600 5.400 0t5.400 0q2.700-3.600 5.400 0t5.400 0q2.700-3.600 5.400 0t5.400 0q2.700-3.600 5.400 0t5.400 0q2.700-3.600 5.400 0t5.400 0" stroke="#1f2f86" stroke-width="3.800" fill="none"/><path d="M-3 45q2.700-3.600 5.400 0t5.400 0q2.700-3.600 5.400 0t5.400 0q2.700-3.600 5.400 0t5.400 0q2.700-3.600 5.400 0t5.400 0q2.700-3.600 5.400 0t5.400 0q2.700-3.600 5.400 0t5.400 0q2.700-3.600 5.400 0t5.400 0" stroke="#1f2f86" stroke-width="3.800" fill="none"/><svg x="0" y="0" width="32" height="22" viewBox="0 0 32 22" overflow="hidden"><rect width="32" height="22" fill="#1f2f86"/><path d="M0 0L32 22M32 0L0 22" stroke="#fff" stroke-width="4.40"/><path d="M0 0L32 22M32 0L0 22" stroke="#e01a24" stroke-width="1.54"/><path d="M16.0 0V22M0 11.0H32" stroke="#fff" stroke-width="7.04"/><path d="M16.0 0V22M0 11.0H32" stroke="#e8141e" stroke-width="3.96"/></svg><path d="M49 10v32" stroke="#8a5a2a" stroke-width="1.500"/><path d="M49 11q-5-6-9-1 5-2 9 2 4-4 9-2-4-5-9 1zM49 12q-7 0-8 6 4-5 8-3 4-2 8 3-1-6-8-6z" fill="#2a8a2a"/><rect x="45.800" y="27.500" width="6.400" height="6" fill="#e8a020" stroke="#b01818" stroke-width=".9"/></svg><rect x="1" y="1" width="64" height="3.500" fill="url(#glT)"/><rect x="1" y="45" width="64" height="4" fill="url(#glB)"/><rect x="1" y="1" width="3" height="48" fill="url(#glL)"/><rect x="60" y="1" width="5" height="48" fill="url(#glR)"/><rect x=".5" y=".5" width="65" height="49" fill="none" stroke="#284f9c" stroke-width="1"/></svg>
<div class="lbl" style="left:953px;top:479.0px"><span style="letter-spacing:0.12px;margin-left:-0.8px">Британская</span><br><span style="letter-spacing:0.32px;margin-left:-0.8px">территория в</span><br><span style="letter-spacing:0.47px;margin-left:-0.8px">Индийском океане</span></div>
<svg class="flag" style="left:1118px;top:420px" width="66" height="50" viewBox="0 0 66 50"><svg x="1" y="1" width="64" height="48" viewBox="0 0 64 48" overflow="hidden"><rect x="0" y="0" width="64" height="48" fill="#f8f000"/><path d="M0 5.300L64 22.800V34.600L0 16z" fill="#fff"/><path d="M0 16L64 34.600V44.300L0 26.100z" fill="#000"/><g fill="none" stroke="#e62a3c" stroke-linecap="round"><path d="M24 24q1.500 13 8.500 13t8.500-13" stroke-width="2.600"/><path d="M32.500 11v25" stroke-width="2.200"/><path d="M20.500 22.500q-.5 6 1.800 10.500M44.500 22q.5 6-1.800 11" stroke-width="2.600"/><path d="M27 38.500q5.500 2 11 0" stroke-width="1.800"/></g><path d="M25 20q7.500-6.500 15 0z" fill="#e62a3c"/><path d="M32.500 8l-1.800 5h3.600z" fill="#d8281e"/><circle cx="32.500" cy="15" r="1.800" fill="#e62a3c"/></svg><rect x="1" y="1" width="64" height="3.500" fill="url(#glT)"/><rect x="1" y="45" width="64" height="4" fill="url(#glB)"/><rect x="1" y="1" width="3" height="48" fill="url(#glL)"/><rect x="60" y="1" width="5" height="48" fill="url(#glR)"/><rect x=".5" y=".5" width="65" height="49" fill="none" stroke="#284f9c" stroke-width="1"/></svg>
<div class="lbl" style="left:1118px;top:500.0px"><span style="letter-spacing:0.34px;margin-left:-0.8px">Бруней</span></div>
<svg class="flag" style="left:1231px;top:420px" width="66" height="50" viewBox="0 0 66 50"><svg x="1" y="1" width="64" height="48" viewBox="0 0 64 48" overflow="hidden"><rect x="0" y="0.00" width="64" height="16.30" fill="#fff"/><rect x="0" y="16.00" width="64" height="16.30" fill="#1e9a50"/><rect x="0" y="32.00" width="64" height="16.30" fill="#f0141e"/></svg><rect x="1" y="1" width="64" height="3.500" fill="url(#glT)"/><rect x="1" y="45" width="64" height="4" fill="url(#glB)"/><rect x="1" y="1" width="3" height="48" fill="url(#glL)"/><rect x="60" y="1" width="5" height="48" fill="url(#glR)"/><rect x=".5" y=".5" width="65" height="49" fill="none" stroke="#284f9c" stroke-width="1"/></svg>
<div class="lbl" style="left:1231px;top:500.0px"><span style="letter-spacing:0.10px;margin-left:-0.8px">Болгария</span></div>
<svg class="flag" style="left:240px;top:545px" width="66" height="50" viewBox="0 0 66 50"><svg x="1" y="1" width="64" height="48" viewBox="0 0 64 48" overflow="hidden"><rect x="0" y="0.00" width="64" height="24.30" fill="#e8141e"/><rect x="0" y="24.00" width="64" height="24.30" fill="#0a7a24"/><polygon points="32.00,17.00 33.57,21.84 38.66,21.84 34.54,24.83 36.11,29.66 32.00,26.67 27.89,29.66 29.46,24.83 25.34,21.84 30.43,21.84" fill="#fff000"/></svg><rect x="1" y="1" width="64" height="3.500" fill="url(#glT)"/><rect x="1" y="45" width="64" height="4" fill="url(#glB)"/><rect x="1" y="1" width="3" height="48" fill="url(#glL)"/><rect x="60" y="1" width="5" height="48" fill="url(#glR)"/><rect x=".5" y=".5" width="65" height="49" fill="none" stroke="#284f9c" stroke-width="1"/></svg>
<div class="lbl" style="left:240px;top:625.0px"><span style="letter-spacing:0.39px;margin-left:-0.8px">Буркина-Фасо</span></div>
<svg class="flag" style="left:388px;top:545px" width="66" height="50" viewBox="0 0 66 50"><svg x="1" y="1" width="64" height="48" viewBox="0 0 64 48" overflow="hidden"><rect width="64" height="48" fill="#fff"/><path d="M8 0H56L32 19z" fill="#d8142a"/><path d="M8 48H56L32 29z" fill="#d8142a"/><path d="M0 6V42L25 24z" fill="#2a962a"/><path d="M64 6V42L39 24z" fill="#2a962a"/><circle cx="32" cy="24" r="10.500" fill="#fff"/><polygon points="32.00,16.00 32.85,17.53 34.60,17.50 33.70,19.00 34.60,20.50 32.85,20.47 32.00,22.00 31.15,20.47 29.40,20.50 30.30,19.00 29.40,17.50 31.15,17.53" fill="#d8142a"/><polygon points="27.00,24.50 27.85,26.03 29.60,26.00 28.70,27.50 29.60,29.00 27.85,28.97 27.00,30.50 26.15,28.97 24.40,29.00 25.30,27.50 24.40,26.00 26.15,26.03" fill="#d8142a"/><polygon points="37.00,24.50 37.85,26.03 39.60,26.00 38.70,27.50 39.60,29.00 37.85,28.97 37.00,30.50 36.15,28.97 34.40,29.00 35.30,27.50 34.40,26.00 36.15,26.03" fill="#d8142a"/></svg><rect x="1" y="1" width="64" height="3.500" fill="url(#glT)"/><rect x="1" y="45" width="64" height="4" fill="url(#glB)"/><rect x="1" y="1" width="3" height="48" fill="url(#glL)"/><rect x="60" y="1" width="5" height="48" fill="url(#glR)"/><rect x=".5" y=".5" width="65" height="49" fill="none" stroke="#284f9c" stroke-width="1"/></svg>
<div class="lbl" style="left:388px;top:625.0px"><span style="letter-spacing:0.50px;margin-left:-0.8px">Бурунди</span></div>
<svg class="flag" style="left:509px;top:545px" width="66" height="50" viewBox="0 0 66 50"><svg x="1" y="1" width="64" height="48" viewBox="0 0 64 48" overflow="hidden"><rect x="0" y="0" width="64" height="48" fill="#0c2aa8"/><rect x="0" y="12.7" width="64" height="24" fill="#e8001e"/><path d="M16.700 36.300h32.600l-3.300-5.300H20z" fill="#fff"/><path d="M20.500 31v-5q0-2.500 2-3.500l.9-4 .9 4q2 1 2 3.500h3.500v-6l1.300-2 .7-4 .7 4 1.300 2v6h3.500q0-2.500 2-3.500l.9-4 .9 4q2 1 2 3.500v5z" fill="#f4f4f4" stroke="#b8bcb8" stroke-width=".5"/><path d="M23 31v-4M26 31v-4M29.500 31v-4M33 31v-5M36.500 31v-4M40 31v-4M43 31v-4M21 33.500h24" stroke="#a8aca8" stroke-width=".8"/></svg><rect x="1" y="1" width="64" height="3.500" fill="url(#glT)"/><rect x="1" y="45" width="64" height="4" fill="url(#glB)"/><rect x="1" y="1" width="3" height="48" fill="url(#glL)"/><rect x="60" y="1" width="5" height="48" fill="url(#glR)"/><rect x=".5" y=".5" width="65" height="49" fill="none" stroke="#284f9c" stroke-width="1"/></svg>
<div class="lbl" style="left:509px;top:625.0px"><span style="letter-spacing:0.50px;margin-left:-0.8px">Камбоджа</span></div>
<svg class="flag" style="left:626px;top:545px" width="66" height="50" viewBox="0 0 66 50"><svg x="1" y="1" width="64" height="48" viewBox="0 0 64 48" overflow="hidden"><rect x="0.00" y="0" width="21.63" height="48" fill="#0a8a3a"/><rect x="21.33" y="0" width="21.63" height="48" fill="#e8141e"/><rect x="42.67" y="0" width="21.63" height="48" fill="#ffff00"/><polygon points="32.00,17.00 33.57,21.84 38.66,21.84 34.54,24.83 36.11,29.66 32.00,26.67 27.89,29.66 29.46,24.83 25.34,21.84 30.43,21.84" fill="#ffee00"/></svg><rect x="1" y="1" width="64" height="3.500" fill="url(#glT)"/><rect x="1" y="45" width="64" height="4" fill="url(#glB)"/><rect x="1" y="1" width="3" height="48" fill="url(#glL)"/><rect x="60" y="1" width="5" height="48" fill="url(#glR)"/><rect x=".5" y=".5" width="65" height="49" fill="none" stroke="#284f9c" stroke-width="1"/></svg>
<div class="lbl" style="left:626px;top:625.0px"><span style="letter-spacing:0.40px;margin-left:-0.8px">Камерун</span></div>
<svg class="flag" style="left:745px;top:545px" width="66" height="50" viewBox="0 0 66 50"><svg x="1" y="1" width="64" height="48" viewBox="0 0 64 48" overflow="hidden"><rect x="0" y="0" width="64" height="48" fill="#fff"/><rect x="0" y="0" width="15" height="48" fill="#f0141e"/><rect x="49" y="0" width="15" height="48" fill="#f0141e"/><path d="M32 8l3 6 3.500-1.500-1.500 8 4.500-4.500 1 2.500 5-.5-2 6 2 1.500-7 6 1 3-7.500-1V41h-2v-6.500l-7.500 1 1-3-7-6 2-1.500-2-6 5 .5 1-2.500 4.500 4.500-1.500-8L29 14z" fill="#f0141e"/></svg><rect x="1" y="1" width="64" height="3.500" fill="url(#glT)"/><rect x="1" y="45" width="64" height="4" fill="url(#glB)"/><rect x="1" y="1" width="3" height="48" fill="url(#glL)"/><rect x="60" y="1" width="5" height="48" fill="url(#glR)"/><rect x=".5" y=".5" width="65" height="49" fill="none" stroke="#284f9c" stroke-width="1"/></svg>
<div class="lbl" style="left:745px;top:625.0px"><span style="letter-spacing:0.08px;margin-left:-0.8px">Канада</span></div>
<svg class="flag" style="left:953px;top:545px" width="66" height="50" viewBox="0 0 66 50"><svg x="1" y="1" width="64" height="48" viewBox="0 0 64 48" overflow="hidden"><rect x="0" y="0" width="64" height="48" fill="#2828a8"/><rect x="0" y="22" width="64" height="15" fill="#fff"/><rect x="0" y="27.2" width="64" height="4.6" fill="#d8142a"/><polygon points="23.50,15.50 23.95,16.88 25.40,16.88 24.23,17.74 24.68,19.12 23.50,18.26 22.32,19.12 22.77,17.74 21.60,16.88 23.05,16.88" fill="#ffe000"/><polygon points="30.26,17.70 30.71,19.08 32.16,19.08 30.99,19.93 31.44,21.31 30.26,20.46 29.08,21.31 29.53,19.93 28.36,19.08 29.81,19.08" fill="#ffe000"/><polygon points="34.44,23.45 34.89,24.83 36.34,24.83 35.16,25.68 35.61,27.06 34.44,26.21 33.26,27.06 33.71,25.68 32.54,24.83 33.99,24.83" fill="#ffe000"/><polygon points="34.44,30.55 34.89,31.94 36.34,31.94 35.16,32.79 35.61,34.17 34.44,33.32 33.26,34.17 33.71,32.79 32.54,31.94 33.99,31.94" fill="#ffe000"/><polygon points="30.26,36.30 30.71,37.69 32.16,37.69 30.99,38.54 31.44,39.92 30.26,39.07 29.08,39.92 29.53,38.54 28.36,37.69 29.81,37.69" fill="#ffe000"/><polygon points="23.50,38.50 23.95,39.88 25.40,39.88 24.23,40.74 24.68,42.12 23.50,41.26 22.32,42.12 22.77,40.74 21.60,39.88 23.05,39.88" fill="#ffe000"/><polygon points="16.74,36.30 17.19,37.69 18.64,37.69 17.47,38.54 17.92,39.92 16.74,39.07 15.56,39.92 16.01,38.54 14.84,37.69 16.29,37.69" fill="#ffe000"/><polygon points="12.56,30.55 13.01,31.94 14.46,31.94 13.29,32.79 13.74,34.17 12.56,33.32 11.39,34.17 11.84,32.79 10.66,31.94 12.11,31.94" fill="#ffe000"/><polygon points="12.56,23.45 13.01,24.83 14.46,24.83 13.29,25.68 13.74,27.06 12.56,26.21 11.39,27.06 11.84,25.68 10.66,24.83 12.11,24.83" fill="#ffe000"/><polygon points="16.74,17.70 17.19,19.08 18.64,19.08 17.47,19.93 17.92,21.31 16.74,20.46 15.56,21.31 16.01,19.93 14.84,19.08 16.29,19.08" fill="#ffe000"/></svg><rect x="1" y="1" width="64" height="3.500" fill="url(#glT)"/><rect x="1" y="45" width="64" height="4" fill="url(#glB)"/><rect x="1" y="1" width="3" height="48" fill="url(#glL)"/><rect x="60" y="1" width="5" height="48" fill="url(#glR)"/><rect x=".5" y=".5" width="65" height="49" fill="none" stroke="#284f9c" stroke-width="1"/></svg>
<div class="lbl" style="left:953px;top:625.0px"><span style="letter-spacing:0.16px;margin-left:-0.8px">Кабо-Верде</span></div>
<svg class="flag" style="left:1118px;top:545px" width="66" height="50" viewBox="0 0 66 50"><svg x="1" y="1" width="64" height="48" viewBox="0 0 64 48" overflow="hidden"><rect x="0" y="0" width="64" height="48" fill="#0c3c78"/><svg x="0" y="0" width="32" height="24.5" viewBox="0 0 32 24.5" overflow="hidden"><rect width="32" height="24.5" fill="#1f2f86"/><path d="M0 0L32 24.5M32 0L0 24.5" stroke="#fff" stroke-width="4.90"/><path d="M0 0L32 24.5M32 0L0 24.5" stroke="#e01a24" stroke-width="1.72"/><path d="M16.0 0V24.5M0 12.25H32" stroke="#fff" stroke-width="7.84"/><path d="M16.0 0V24.5M0 12.25H32" stroke="#e8141e" stroke-width="4.41"/></svg><ellipse cx="47.900" cy="23.800" rx="8.800" ry="13.100" fill="#fff" stroke="#0a2a5a" stroke-width=".6"/><circle cx="47.900" cy="14.800" r="1.600" fill="#e88a28"/><ellipse cx="47.900" cy="17.600" rx="2.600" ry="1.700" fill="#1e7a3a"/><path d="M44.500 19.500h6.800v4q-3.400 4-6.800 0z" fill="#e03a28"/><path d="M46 20.500v3M47.900 20.500v3.500M49.800 20.500v3" stroke="#f8a070" stroke-width=".6"/><path d="M45.500 26h4.800l.7 4.500h-6.200z" fill="#1e8a4a"/><path d="M47.900 25.500v6" stroke="#3a7ac8" stroke-width="1.600"/><path d="M42.800 31q5.100 5 10.200 0l-.8 3q-4.300 3-8.600 0z" fill="#f0c83a"/></svg><rect x="1" y="1" width="64" height="3.500" fill="url(#glT)"/><rect x="1" y="45" width="64" height="4" fill="url(#glB)"/><rect x="1" y="1" width="3" height="48" fill="url(#glL)"/><rect x="60" y="1" width="5" height="48" fill="url(#glR)"/><rect x=".5" y=".5" width="65" height="49" fill="none" stroke="#284f9c" stroke-width="1"/></svg>
<div class="lbl" style="left:1118px;top:614.5px"><span style="letter-spacing:0.38px;margin-left:-0.8px">Каймановы</span><br><span style="letter-spacing:0.50px;margin-left:-0.8px">Острова</span></div>
<svg class="flag" style="left:1231px;top:545px" width="66" height="50" viewBox="0 0 66 50"><svg x="1" y="1" width="64" height="48" viewBox="0 0 64 48" overflow="hidden"><rect x="0" y="0.00" width="64" height="12.30" fill="#1a3a9a"/><rect x="0" y="12.00" width="64" height="12.30" fill="#fff"/><rect x="0" y="24.00" width="64" height="12.30" fill="#2a8a1a"/><rect x="0" y="36.00" width="64" height="12.30" fill="#ffe030"/><rect x="26.5" y="0" width="11" height="48" fill="#f0141e"/><polygon points="9.00,2.00 10.01,5.11 13.28,5.11 10.63,7.03 11.65,10.14 9.00,8.22 6.35,10.14 7.37,7.03 4.72,5.11 7.99,5.11" fill="#ffe000"/></svg><rect x="1" y="1" width="64" height="3.500" fill="url(#glT)"/><rect x="1" y="45" width="64" height="4" fill="url(#glB)"/><rect x="1" y="1" width="3" height="48" fill="url(#glL)"/><rect x="60" y="1" width="5" height="48" fill="url(#glR)"/><rect x=".5" y=".5" width="65" height="49" fill="none" stroke="#284f9c" stroke-width="1"/></svg>
<div class="lbl" style="left:1231px;top:604.0px"><span style="letter-spacing:0.35px;margin-left:0px">Центрально-</span><br><span style="letter-spacing:0.15px;margin-left:0px">Африканская</span><br><span style="letter-spacing:0.20px;margin-left:-0.8px">Республика</span></div>
</div></div>
<div class="a" style="left:1406px;top:132px;width:17px;height:515px;background:#f0f0f0"></div>
<div class="a" style="left:1423px;top:132px;width:2px;height:515px;background:#fbfbfb"></div>
<div class="a" style="left:1407px;top:166px;width:15px;height:78px;background:#cdcdcd"></div>
<svg class="a" style="left:1408px;top:148px" width="14" height="11" viewBox="0 0 14 11" ><path d="M1.800 9L6.600 2.700 11.400 9" fill="none" stroke="#555" stroke-width="2.300" stroke-linejoin="miter"/></svg>
<svg class="a" style="left:1408px;top:620px" width="14" height="11" viewBox="0 0 14 11" ><path d="M1.800 1.800L6.600 8.100 11.400 1.800" fill="none" stroke="#555" stroke-width="2.300" stroke-linejoin="miter"/></svg>
<div class="a" style="left:1px;top:647px;width:1424px;height:4px;background:#f4f4f4"></div>
<div class="a" style="left:1px;top:647px;width:222px;height:1px;background:#828790"></div>
<div class="a" style="left:1px;top:650px;width:173px;height:150px;background:#fff;border-top:1px solid #8c9096;border-left:1px solid #6e747c;box-sizing:border-box"></div>
<svg class="a" style="left:2px;top:651px" width="172" height="149" viewBox="2 651 172 149">
<path d="M11 733C14 748 30 763 60 763C95 763 135 745 146 714L141 712C130 738 92 757 60 757.500C34 758 17 746 12.500 733z" fill="#1f3578"/>
<path d="M156.500 681L159.300 693.500L173 695.600L161.500 703L164 719L152.500 709.500L128 719.500L143 704L129.500 695.600L149.500 694z" fill="#e2062c"/>
<g transform="translate(7 726) rotate(-14.500) skewX(-23) scale(.81 1)"><text x="0" y="0" font-family="Liberation Sans,sans-serif" font-weight="bold" font-style="italic" fill="#1f3578" stroke="#1f3578" stroke-width=".8"><tspan font-size="62">E</tspan><tspan font-size="45.500" dx="-5" dy="-5.500" letter-spacing="-1">uropa</tspan></text></g>
<g transform="translate(50 729.500) rotate(-11.500) skewX(-14) scale(1.220 1)"><text x="0" y="0" font-family="Liberation Sans,sans-serif" font-style="italic" font-size="30" fill="#d6213f" stroke="#d6213f" stroke-width=".7">plus</text></g>
<text x="29" y="789.500" font-family="Liberation Sans,sans-serif" font-weight="bold" font-size="16" fill="#d83a4c" textLength="104" lengthAdjust="spacingAndGlyphs">Киев 107,0 FM</text>
</svg>
<div class="a" style="left:2px;top:800px;width:172px;height:27px;background:#f0f0f0;overflow:hidden"><svg class="a" style="left:7px;top:7px" width="10" height="17"><path d="M9.500 .5v16L.5 8.500z" fill="#a9a9a9"/></svg><div class="t" style="top:6.5px;left:19.6px;color:#a3a3a3;letter-spacing:-0.07px;">Предыдущий</div><svg class="a" style="left:108px;top:7px" width="10" height="17"><path d="M.5 .5v16L9.500 8.500z" fill="#a9a9a9"/></svg><div class="t" style="top:6.5px;left:114.0px;color:#a3a3a3;letter-spacing:-0.04px;">Следующий</div></div>
<div class="a" style="left:176px;top:651px;width:1249px;height:176px;background:#fff;border:1px solid #828790;box-sizing:border-box"></div>
<div class="a" style="left:327px;top:652px;width:1px;height:25px;background:#e5e5e5"></div>
<div class="a" style="left:477px;top:652px;width:1px;height:25px;background:#e5e5e5"></div>
<div class="a" style="left:580px;top:652px;width:1px;height:25px;background:#e5e5e5"></div>
<div class="a" style="left:780px;top:652px;width:1px;height:25px;background:#e5e5e5"></div>
<div class="a" style="left:899px;top:652px;width:1px;height:25px;background:#e5e5e5"></div>
<div class="a" style="left:1014px;top:652px;width:1px;height:25px;background:#e5e5e5"></div>
<div class="t" style="top:657px;left:184.0px;font-size:11.8px;letter-spacing:0.25px;">Исполнитель</div>
<div class="t" style="top:657px;left:334.5px;font-size:11.8px;letter-spacing:-0.07px;">Название песни</div>
<div class="t" style="top:657px;left:484.0px;font-size:11.8px;letter-spacing:-0.01px;">Длительность</div>
<div class="t" style="top:657px;left:587.7px;font-size:11.8px;letter-spacing:-0.25px;">Название</div>
<div class="t" style="top:657px;left:787.4px;font-size:11.8px;letter-spacing:-0.46px;">Статус</div>
<div class="t" style="top:657px;left:906.5px;font-size:11.8px;letter-spacing:-0.26px;">Битрейт</div>
<svg class="a" style="left:183px;top:679.5px" width="15" height="15" viewBox="0 0 15 15" ><defs><radialGradient id="gb" cx=".45" cy=".3" r=".75"><stop offset="0" stop-color="#c8ff9a"/><stop offset=".5" stop-color="#4cc81e"/><stop offset="1" stop-color="#1f7a0c"/></radialGradient></defs>
<circle cx="7.500" cy="7.500" r="6.600" fill="url(#gb)" stroke="#3f8a2a" stroke-width=".7"/><ellipse cx="7" cy="4.300" rx="3.600" ry="2" fill="#fff" opacity=".35"/></svg>
<div class="t" style="top:679px;left:484.0px;font-size:11.5px;letter-spacing:-0.32px;">03:00</div>
<div class="t" style="top:679px;left:587.7px;font-size:11.5px;letter-spacing:-0.18px;">Europa Plus 107.0 FM</div>
<div class="t" style="top:679px;left:787.4px;font-size:11.5px;letter-spacing:0.12px;">Воспроизведение</div>
<div class="t" style="top:679px;left:906.5px;font-size:11.5px;letter-spacing:-0.07px;">128 kbps (MP3)</div>
<svg class="a" style="left:6px;top:837px" width="24" height="18" viewBox="0 0 24 18" ><defs><linearGradient id="spg" x1="0" y1="0" x2="1" y2="0"><stop offset="0" stop-color="#8c8c8c"/><stop offset=".6" stop-color="#cfcfcf"/><stop offset="1" stop-color="#b4b4b4"/></linearGradient></defs>
<path d="M.7 5.700h4.300L12.700 .7v16.600L5 12.300H.7z" fill="url(#spg)" stroke="#0c4a40" stroke-width="1.200" stroke-linejoin="round"/>
<path d="M14.400 9L19.600 .5 23 4.800v8.400L19.600 17.500z" fill="#0b463c"/>
<path d="M19.800 2.800L16.600 9l3.200 6.200M22 4.800L19.600 9l2.400 4.200" fill="none" stroke="#58a896" stroke-width=".55"/></svg>
<div class="a" style="left:39px;top:843px;width:119px;height:1px;background:#0c0c0c;box-shadow:0 1px 0 rgba(0,0,0,.28)"></div>
<div class="a" style="left:94px;top:837px;width:9px;height:17px;background:#c9c9c9;border:1.500px solid #2a2a2a;border-radius:3.500px;box-sizing:border-box"></div>
<div class="a" style="left:42px;top:856px;width:1px;height:3px;background:#b5b5b5"></div><div class="a" style="left:154px;top:856px;width:1px;height:3px;background:#b5b5b5"></div>
<div class="t" style="top:831px;left:351.5px;letter-spacing:0.11px;">Прослушано:</div>
<div class="t" style="top:831px;left:435.0px;font-size:11.5px;color:#1010c8;letter-spacing:-0.32px;">03:00</div>
<div class="t" style="top:848px;left:370.0px;letter-spacing:0.01px;">Записано:</div>
<div class="a" style="left:1192px;top:848px;width:12px;height:17px;background:#99c6f7"></div>
<div class="a" style="left:1206px;top:836px;width:12px;height:29px;background:#99c6f7"></div>
<div class="a" style="left:1220px;top:844px;width:12px;height:21px;background:#99c6f7"></div>
<div class="a" style="left:1234px;top:864px;width:12px;height:1px;background:#99c6f7"></div>
<div class="a" style="left:1248px;top:862px;width:12px;height:3px;background:#99c6f7"></div>
<div class="a" style="left:1262px;top:862px;width:12px;height:3px;background:#99c6f7"></div>
<div class="a" style="left:1276px;top:858px;width:12px;height:7px;background:#99c6f7"></div>
<div class="a" style="left:1290px;top:858px;width:12px;height:7px;background:#99c6f7"></div>
<div class="a" style="left:1304px;top:857px;width:12px;height:8px;background:#99c6f7"></div>
<div class="a" style="left:1318px;top:855px;width:12px;height:10px;background:#99c6f7"></div>
<div class="a" style="left:1332px;top:859px;width:12px;height:6px;background:#99c6f7"></div>
<div class="a" style="left:1346px;top:859px;width:12px;height:6px;background:#99c6f7"></div>
<div class="a" style="left:1360px;top:857px;width:12px;height:8px;background:#99c6f7"></div>
<div class="a" style="left:1374px;top:863px;width:12px;height:2px;background:#99c6f7"></div>
<div class="a" style="left:1388px;top:861px;width:12px;height:4px;background:#99c6f7"></div>
<div class="a" style="left:1px;top:865px;width:1424px;height:1px;background:#dcdcdc"></div>
<svg class="a" style="left:4px;top:871px" width="15" height="15" viewBox="0 0 15 15" ><defs><radialGradient id="ig" cx=".4" cy=".3" r=".8"><stop offset="0" stop-color="#8fa6f5"/><stop offset=".6" stop-color="#4560d8"/><stop offset="1" stop-color="#2a3fae"/></radialGradient></defs>
<circle cx="7.500" cy="7.500" r="7" fill="url(#ig)" stroke="#a9b6ee" stroke-width=".8"/>
<text x="7.600" y="12" text-anchor="middle" font-family="Liberation Serif,serif" font-weight="bold" font-size="12.500" fill="#fff">i</text></svg>
<div class="a" style="left:1089px;top:868px;width:1px;height:20px;background:#d9d9d9"></div>
<div class="a" style="left:1118px;top:868px;width:1px;height:20px;background:#d9d9d9"></div>
<div class="a" style="left:1142px;top:868px;width:1px;height:20px;background:#d9d9d9"></div>
<div class="a" style="left:1165px;top:868px;width:1px;height:20px;background:#d9d9d9"></div>
<div class="a" style="left:1188px;top:868px;width:1px;height:20px;background:#d9d9d9"></div>
<div class="a" style="left:1202px;top:868px;width:1px;height:20px;background:#d9d9d9"></div>
<div class="a" style="left:1225px;top:868px;width:1px;height:20px;background:#d9d9d9"></div>
<div class="a" style="left:1254px;top:868px;width:1px;height:20px;background:#d9d9d9"></div>
<div class="a" style="left:1355px;top:868px;width:1px;height:20px;background:#d9d9d9"></div>
<div class="a" style="left:1405px;top:868px;width:1px;height:20px;background:#d9d9d9"></div>
<div class="t" style="top:869.5px;left:1259.5px;font-size:11.8px;letter-spacing:-0.25px;">72,1 ГБ свободно</div>
<div class="t" style="top:869.5px;left:1360.0px;font-size:11.5px;letter-spacing:-0.22px;">6:45 PM</div>
<svg class="a" style="left:1412px;top:877px" width="12" height="10" viewBox="0 0 12 10" ><rect x="9" y="1" width="2" height="2" fill="#b8b8b8"/><rect x="6" y="4" width="2" height="2" fill="#b8b8b8"/><rect x="9" y="4" width="2" height="2" fill="#b8b8b8"/><rect x="3" y="7" width="2" height="2" fill="#b8b8b8"/><rect x="6" y="7" width="2" height="2" fill="#b8b8b8"/><rect x="9" y="7" width="2" height="2" fill="#b8b8b8"/></svg>
<svg class="a" style="left:0;top:882px" width="8" height="8"><path d="M0 8h8A8 8 0 0 1 0 0z" fill="#000"/></svg>
<svg class="a" style="left:1418px;top:882px" width="8" height="8"><path d="M8 8H0A8 8 0 0 0 8 0z" fill="#000"/></svg>
</body></html>
